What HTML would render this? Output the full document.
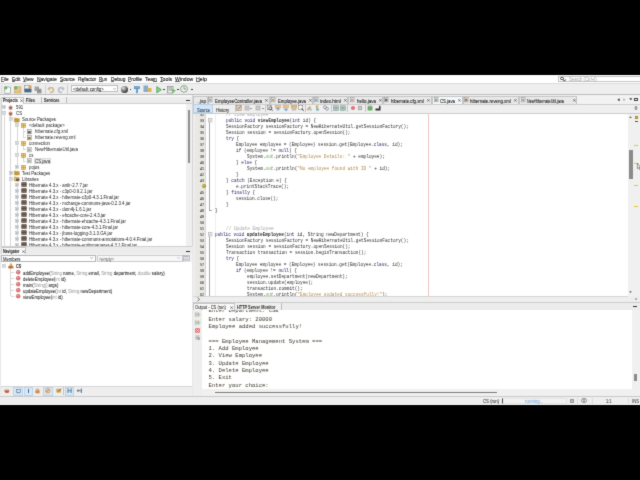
<!DOCTYPE html><html><head><meta charset="utf-8"><style>
html,body{margin:0;padding:0;background:#000;width:640px;height:480px;overflow:hidden}
#wrap{position:absolute;left:0;top:0;width:640px;height:480px;filter:url(#bl)}
#root{position:absolute;left:0;top:0;width:640px;height:480px;will-change:transform;background:#000}
.t{position:absolute;white-space:pre;line-height:0;height:0}
.r{position:absolute;box-sizing:border-box}
</style></head><body><svg width="0" height="0" style="position:absolute"><filter id="bl" x="0" y="0" width="640" height="480" filterUnits="userSpaceOnUse"><feConvolveMatrix color-interpolation-filters="sRGB" order="3" kernelMatrix="0.02 0.08 0.02 0.08 0.6 0.08 0.02 0.08 0.02" edgeMode="duplicate"/></filter></svg><div id="wrap"><div id="root">

<div class="r" style="left:0.00px;top:75.35px;width:640.00px;height:329.30px;background:#eeeeee;"></div>
<div class="r" style="left:0.00px;top:75.35px;width:640.00px;height:8.25px;background:#ffffff;"></div>
<div class="r" style="left:0.00px;top:83.40px;width:640.00px;height:0.70px;background:#dcdcdc;"></div>
<div class="t" style="left:1.40px;top:79.14px;font-size:6.125px;color:#1a1a1a;font-family:'Liberation Sans',sans-serif;-webkit-text-stroke:0.14px #1a1a1a;transform:scaleX(0.7599);transform-origin:0 0;">File</div>
<div class="r" style="left:1.40px;top:81.20px;width:2.84px;height:0.40px;background:#666;"></div>
<div class="t" style="left:11.70px;top:79.14px;font-size:6.125px;color:#1a1a1a;font-family:'Liberation Sans',sans-serif;-webkit-text-stroke:0.14px #1a1a1a;transform:scaleX(0.8054);transform-origin:0 0;">Edit</div>
<div class="r" style="left:11.70px;top:81.20px;width:3.29px;height:0.40px;background:#666;"></div>
<div class="t" style="left:23.00px;top:79.14px;font-size:6.125px;color:#1a1a1a;font-family:'Liberation Sans',sans-serif;-webkit-text-stroke:0.14px #1a1a1a;transform:scaleX(0.8127);transform-origin:0 0;">View</div>
<div class="r" style="left:23.00px;top:81.20px;width:3.32px;height:0.40px;background:#666;"></div>
<div class="t" style="left:37.00px;top:79.14px;font-size:6.125px;color:#1a1a1a;font-family:'Liberation Sans',sans-serif;-webkit-text-stroke:0.14px #1a1a1a;transform:scaleX(0.8149);transform-origin:0 0;">Navigate</div>
<div class="r" style="left:37.00px;top:81.20px;width:3.60px;height:0.40px;background:#666;"></div>
<div class="t" style="left:60.00px;top:79.14px;font-size:6.125px;color:#1a1a1a;font-family:'Liberation Sans',sans-serif;-webkit-text-stroke:0.14px #1a1a1a;transform:scaleX(0.7729);transform-origin:0 0;">Source</div>
<div class="r" style="left:60.00px;top:81.20px;width:3.16px;height:0.40px;background:#666;"></div>
<div class="t" style="left:78.10px;top:79.14px;font-size:6.125px;color:#1a1a1a;font-family:'Liberation Sans',sans-serif;-webkit-text-stroke:0.14px #1a1a1a;transform:scaleX(0.7862);transform-origin:0 0;">Refactor</div>
<div class="r" style="left:81.58px;top:81.20px;width:2.68px;height:0.40px;background:#666;"></div>
<div class="t" style="left:99.40px;top:79.14px;font-size:6.125px;color:#1a1a1a;font-family:'Liberation Sans',sans-serif;-webkit-text-stroke:0.14px #1a1a1a;transform:scaleX(0.7209);transform-origin:0 0;">Run</div>
<div class="r" style="left:99.40px;top:81.20px;width:3.19px;height:0.40px;background:#666;"></div>
<div class="t" style="left:110.60px;top:79.14px;font-size:6.125px;color:#1a1a1a;font-family:'Liberation Sans',sans-serif;-webkit-text-stroke:0.14px #1a1a1a;transform:scaleX(0.7978);transform-origin:0 0;">Debug</div>
<div class="r" style="left:110.60px;top:81.20px;width:3.53px;height:0.40px;background:#666;"></div>
<div class="t" style="left:128.10px;top:79.14px;font-size:6.125px;color:#1a1a1a;font-family:'Liberation Sans',sans-serif;-webkit-text-stroke:0.14px #1a1a1a;transform:scaleX(0.8122);transform-origin:0 0;">Profile</div>
<div class="r" style="left:128.10px;top:81.20px;width:3.32px;height:0.40px;background:#666;"></div>
<div class="t" style="left:145.10px;top:79.14px;font-size:6.125px;color:#1a1a1a;font-family:'Liberation Sans',sans-serif;-webkit-text-stroke:0.14px #1a1a1a;transform:scaleX(0.7945);transform-origin:0 0;">Team</div>
<div class="r" style="left:152.95px;top:81.20px;width:4.05px;height:0.40px;background:#666;"></div>
<div class="t" style="left:159.90px;top:79.14px;font-size:6.125px;color:#1a1a1a;font-family:'Liberation Sans',sans-serif;-webkit-text-stroke:0.14px #1a1a1a;transform:scaleX(0.8532);transform-origin:0 0;">Tools</div>
<div class="r" style="left:159.90px;top:81.20px;width:3.19px;height:0.40px;background:#666;"></div>
<div class="t" style="left:174.90px;top:79.14px;font-size:6.125px;color:#1a1a1a;font-family:'Liberation Sans',sans-serif;-webkit-text-stroke:0.14px #1a1a1a;transform:scaleX(0.8400);transform-origin:0 0;">Window</div>
<div class="r" style="left:174.90px;top:81.20px;width:4.86px;height:0.40px;background:#666;"></div>
<div class="t" style="left:196.00px;top:79.14px;font-size:6.125px;color:#1a1a1a;font-family:'Liberation Sans',sans-serif;-webkit-text-stroke:0.14px #1a1a1a;transform:scaleX(0.8653);transform-origin:0 0;">Help</div>
<div class="r" style="left:196.00px;top:81.20px;width:3.83px;height:0.40px;background:#666;"></div>
<div class="r" style="left:557.50px;top:75.60px;width:83.00px;height:6.80px;background:#ffffff;border:0.5px solid #c4c4c4"></div>
<div class="t" style="left:569.20px;top:79.60px;font-size:4.956px;color:#a0a0a0;font-family:'Liberation Sans',sans-serif;-webkit-text-stroke:0px #a0a0a0;transform:scaleX(0.8591);transform-origin:0 0;">Search (Ctrl+I)</div>
<div class="r" style="left:560.3px;top:76.8px;width:3.4px;height:3.4px;border:0.7px solid #333;border-radius:50%"></div>
<div class="r" style="left:563.20px;top:79.90px;width:2.00px;height:0.80px;background:#333;transform:rotate(45deg)"></div>
<div class="t" style="left:565.40px;top:79.70px;font-size:2.950px;color:#333;font-family:'Liberation Sans',sans-serif;-webkit-text-stroke:0px #333;transform:scaleX(0.8475);transform-origin:0 0;">▾</div>
<div class="r" style="left:0.00px;top:94.00px;width:640.00px;height:0.80px;background:#bdbdbd;"></div>
<div class="r" style="left:0.00px;top:94.80px;width:640.00px;height:2.50px;background:#f6f6f6;"></div>
<div class="r" style="left:1.20px;top:85.50px;width:0.80px;height:0.80px;background:#c4c4c4;"></div>
<div class="r" style="left:1.20px;top:87.50px;width:0.80px;height:0.80px;background:#c4c4c4;"></div>
<div class="r" style="left:1.20px;top:89.50px;width:0.80px;height:0.80px;background:#c4c4c4;"></div>
<div class="r" style="left:1.20px;top:91.50px;width:0.80px;height:0.80px;background:#c4c4c4;"></div>
<svg class="r" style="left:4.40px;top:85.60px;overflow:visible" width="7" height="7.4" viewBox="0 0 7 7.4"><rect x="0.8" y="1" width="5.6" height="6.2" fill="#fafafa" stroke="#8a8a8a" stroke-width="0.6"/><circle cx="1.8" cy="1.8" r="1.6" fill="#5cb85c"/></svg>
<svg class="r" style="left:13.70px;top:85.60px;overflow:visible" width="7.4" height="7.4" viewBox="0 0 7.4 7.4"><rect x="0.6" y="0.8" width="6.4" height="6.2" fill="#e6c482" stroke="#c09a5a" stroke-width="0.6"/><circle cx="1.8" cy="1.8" r="1.6" fill="#5cb85c"/></svg>
<svg class="r" style="left:24.00px;top:85.40px;overflow:visible" width="8" height="7.6" viewBox="0 0 8 7.6"><rect x="0.5" y="0.5" width="5" height="4" fill="#f0f0f0" stroke="#777" stroke-width="0.5"/><rect x="4.5" y="0.3" width="3" height="3" fill="#e0a050"/><rect x="0.3" y="3.6" width="7.2" height="3.8" fill="#4a6888"/></svg>
<svg class="r" style="left:34.00px;top:85.60px;overflow:visible" width="8" height="7.4" viewBox="0 0 8 7.4"><rect x="0.5" y="0.5" width="4.5" height="4.5" fill="#a4a4a4"/><rect x="3" y="2.8" width="4.5" height="4.5" fill="#949494"/></svg>
<div class="r" style="left:44.80px;top:85.00px;width:0.60px;height:8.50px;background:#d0d0d0;"></div>
<svg class="r" style="left:47.00px;top:85.60px;overflow:visible" width="8" height="7.4" viewBox="0 0 8 7.4"><path d="M1.5 2.5 Q6.5 0.5 6.5 4 Q6.5 6.5 3 6.5" fill="none" stroke="#d2b890" stroke-width="1.7"/><path d="M0.3 2.8 L3 0.6 L3 5 Z" fill="#d2b890"/></svg>
<svg class="r" style="left:57.40px;top:85.60px;overflow:visible" width="8" height="7.4" viewBox="0 0 8 7.4"><path d="M6.5 2.5 Q1.5 0.5 1.5 4 Q1.5 6.5 5 6.5" fill="none" stroke="#b6bec6" stroke-width="1.7"/><path d="M7.7 2.8 L5 0.6 L5 5 Z" fill="#b6bec6"/></svg>
<div class="r" style="left:66.80px;top:85.00px;width:0.60px;height:8.50px;background:#d0d0d0;"></div>
<div class="r" style="left:70.50px;top:85.30px;width:47.00px;height:7.20px;background:#ffffff;border:0.5px solid #bcbcbc"></div>
<div class="t" style="left:72.50px;top:88.60px;font-size:5.074px;color:#1a1a1a;font-family:'Liberation Sans',sans-serif;-webkit-text-stroke:0.04px #1a1a1a;transform:scaleX(0.8529);transform-origin:0 0;">&lt;default config&gt;</div>
<svg class="r" style="left:112.80px;top:87.80px;overflow:visible" width="3" height="2" viewBox="0 0 3 2"><path d="M0.2 0.2 L1.5 1.6 L2.8 0.2" fill="none" stroke="#777" stroke-width="0.6"/></svg>
<div class="r" style="left:120.5px;top:85.6px;width:7px;height:7px;border-radius:50%;background:radial-gradient(circle at 35% 30%,#e8e8e8 0,#8a8a8a 35%,#2a2a2a 80%)"></div>
<div class="r" style="left:129.70px;top:88.80px;width:1.60px;height:0.90px;background:#444;"></div>
<svg class="r" style="left:134.00px;top:85.60px;overflow:visible" width="6" height="7.4" viewBox="0 0 6 7.4"><rect x="0.3" y="0.5" width="5.4" height="2.4" fill="#6aa8dc" stroke="#3a78b0" stroke-width="0.4"/><rect x="2.1" y="2.7" width="1.8" height="4.5" fill="#5a98cc"/></svg>
<svg class="r" style="left:143.00px;top:85.40px;overflow:visible" width="9" height="7.6" viewBox="0 0 9 7.6"><rect x="0.5" y="0.5" width="4.5" height="6.5" fill="#6a9ac8" opacity=".8"/><path d="M4 1 L8.5 7 L5 7 Z" fill="#d8a040"/><rect x="4.5" y="3" width="4" height="4" fill="#e0b050"/></svg>
<svg class="r" style="left:155.50px;top:85.60px;overflow:visible" width="6" height="7.4" viewBox="0 0 6 7.4"><path d="M0.8 0.6 L5.4 3.7 L0.8 6.8 Z" fill="#8ed08e" stroke="#3a9a3a" stroke-width="0.7"/></svg>
<div class="r" style="left:163.20px;top:88.80px;width:1.60px;height:0.90px;background:#444;"></div>
<svg class="r" style="left:167.00px;top:85.60px;overflow:visible" width="9.5" height="7.4" viewBox="0 0 9.5 7.4"><rect x="0.5" y="0.5" width="5.5" height="6.5" fill="#f4f4f4" stroke="#777" stroke-width="0.6"/><rect x="1.3" y="1.5" width="3.8" height="1" fill="#888"/><rect x="1.3" y="3.5" width="3.8" height="1" fill="#888"/><path d="M5 2.5 L9 4.8 L5 7.2 Z" fill="#6ac06a"/></svg>
<div class="r" style="left:177.20px;top:88.80px;width:1.60px;height:0.90px;background:#444;"></div>
<svg class="r" style="left:180.30px;top:85.40px;overflow:visible" width="8.6" height="7.8" viewBox="0 0 8.6 7.8"><circle cx="4" cy="3.9" r="3.4" fill="#eef4ee" stroke="#7a8a7a" stroke-width="0.8"/><path d="M4 1.5 L4 4 L6 4" stroke="#4a9a4a" stroke-width="0.8" fill="none"/></svg>
<div class="r" style="left:191.20px;top:88.80px;width:1.60px;height:0.90px;background:#444;"></div>
<div class="r" style="left:0.00px;top:97.20px;width:192.60px;height:149.00px;background:#e8e8e8;"></div>
<div class="r" style="left:1.20px;top:96.70px;width:191.00px;height:0.50px;background:#dcdcdc;"></div>
<div class="r" style="left:1.20px;top:97.20px;width:191.00px;height:6.30px;background:#ececec;"></div>
<div class="r" style="left:1.20px;top:103.30px;width:191.00px;height:0.60px;background:#d0d0d0;"></div>
<div class="r" style="left:1.40px;top:97.30px;width:23.00px;height:6.60px;background:#fbfbfb;border:0.5px solid #c4c4c4;border-bottom:none"></div>
<div class="t" style="left:3.00px;top:101.30px;font-size:4.956px;color:#111;font-family:'Liberation Sans',sans-serif;font-weight:bold;-webkit-text-stroke:0.04px #111;transform:scaleX(0.7670);transform-origin:0 0;">Projects</div>
<svg class="r" style="left:20.10px;top:98.90px;overflow:visible" width="3.2" height="3.2" viewBox="0 0 3.2 3.2"><path d="M0.3 0.3 L2.9 2.9 M2.9 0.3 L0.3 2.9" stroke="#333" stroke-width="0.6"/></svg>
<div class="r" style="left:24.40px;top:97.30px;width:18.00px;height:6.10px;background:#efefef;border-right:0.6px solid #bcbcbc"></div>
<div class="t" style="left:26.00px;top:101.30px;font-size:4.956px;color:#222;font-family:'Liberation Sans',sans-serif;font-weight:bold;-webkit-text-stroke:0.04px #222;transform:scaleX(0.7969);transform-origin:0 0;">Files</div>
<div class="r" style="left:42.40px;top:97.30px;width:24.50px;height:6.10px;background:#efefef;border-right:0.6px solid #bcbcbc"></div>
<div class="t" style="left:44.00px;top:101.30px;font-size:4.956px;color:#222;font-family:'Liberation Sans',sans-serif;font-weight:bold;-webkit-text-stroke:0.04px #222;transform:scaleX(0.7601);transform-origin:0 0;">Services</div>
<div class="r" style="left:186.30px;top:100.20px;width:4.20px;height:1.00px;background:#333;"></div>
<div class="r" style="left:1.40px;top:103.90px;width:185.00px;height:142.20px;background:#ffffff;"></div>
<div class="r" style="left:0.90px;top:97.30px;width:0.50px;height:149.00px;background:#d0d0d0;"></div>
<div class="r" style="left:186.20px;top:103.90px;width:5.60px;height:142.20px;background:#efefef;"></div>
<div class="r" style="left:187.60px;top:110.20px;width:2.60px;height:53.30px;background:#8e8e8e;"></div>
<div class="r" style="left:192.00px;top:95.00px;width:0.60px;height:301.00px;background:#d4d4d4;"></div>
<div class="r" style="left:1.4px;top:103.9px;width:184.8px;height:141.7px;overflow:hidden"><div class="r" style="left:-1.4px;top:-103.9px;width:640px;height:480px">
<div class="r" style="left:4.00px;top:109.50px;width:0.50px;height:150.00px;background:#d8d8d8;"></div>
<div class="r" style="left:10.40px;top:115.77px;width:0.50px;height:150.00px;background:#d8d8d8;"></div>
<div class="r" style="left:16.90px;top:121.75px;width:0.50px;height:45.30px;background:#d8d8d8;"></div>
<div class="r" style="left:23.40px;top:127.72px;width:0.50px;height:9.45px;background:#d8d8d8;"></div>
<div class="r" style="left:23.40px;top:131.20px;width:3.00px;height:0.50px;background:#d8d8d8;"></div>
<div class="r" style="left:23.40px;top:137.18px;width:3.00px;height:0.50px;background:#d8d8d8;"></div>
<div class="r" style="left:23.40px;top:145.65px;width:0.50px;height:3.48px;background:#d8d8d8;"></div>
<div class="r" style="left:23.40px;top:149.12px;width:3.00px;height:0.50px;background:#d8d8d8;"></div>
<div class="r" style="left:23.40px;top:157.60px;width:0.50px;height:3.47px;background:#d8d8d8;"></div>
<div class="r" style="left:23.40px;top:161.07px;width:3.00px;height:0.50px;background:#d8d8d8;"></div>
<div class="r" style="left:16.90px;top:181.50px;width:0.50px;height:60.00px;background:#d8d8d8;"></div>
<svg class="r" style="left:2.20px;top:105.30px;overflow:visible" width="4" height="4" viewBox="0 0 4 4"><rect x="0.3" y="0.3" width="3.4" height="3.4" fill="#f6f6f6" stroke="#b4b8bc" stroke-width="0.55"/><path d="M1.1 2 H2.9 M2 1.1 V2.9" stroke="#6a7078" stroke-width="0.5"/></svg>
<svg class="r" style="left:8.00px;top:105.10px;overflow:visible" width="5.2" height="4.6" viewBox="0 0 5.2 4.6"><path d="M0.6 1.6 L4.6 1.6 L4.1 3.6 Q2.6 4.3 1.1 3.6 Z" fill="#a8583e"/><path d="M1.4 1.3 Q2.6 0 3.8 1.3" fill="none" stroke="#b87a60" stroke-width="0.6"/><ellipse cx="2.6" cy="4.1" rx="2.4" ry="0.45" fill="#7a4a3a"/></svg>
<div class="t" style="left:15.90px;top:108.13px;font-size:4.872px;color:#1a1a1a;font-family:'Liberation Sans',sans-serif;-webkit-text-stroke:0px #1a1a1a;transform:scaleX(0.8929);transform-origin:0 0;">591</div>
<svg class="r" style="left:2.20px;top:111.27px;overflow:visible" width="4" height="4" viewBox="0 0 4 4"><rect x="0.3" y="0.3" width="3.4" height="3.4" fill="#f6f6f6" stroke="#b4b8bc" stroke-width="0.55"/><path d="M1.1 2 H2.9" stroke="#6a7078" stroke-width="0.5"/></svg>
<svg class="r" style="left:8.00px;top:111.07px;overflow:visible" width="5.2" height="4.6" viewBox="0 0 5.2 4.6"><path d="M0.6 1.6 L4.6 1.6 L4.1 3.6 Q2.6 4.3 1.1 3.6 Z" fill="#a8583e"/><path d="M1.4 1.3 Q2.6 0 3.8 1.3" fill="none" stroke="#b87a60" stroke-width="0.6"/><ellipse cx="2.6" cy="4.1" rx="2.4" ry="0.45" fill="#7a4a3a"/></svg>
<div class="t" style="left:15.90px;top:114.11px;font-size:4.872px;color:#1a1a1a;font-family:'Liberation Sans',sans-serif;-webkit-text-stroke:0px #1a1a1a;transform:scaleX(0.8929);transform-origin:0 0;">CS</div>
<svg class="r" style="left:8.65px;top:117.25px;overflow:visible" width="4" height="4" viewBox="0 0 4 4"><rect x="0.3" y="0.3" width="3.4" height="3.4" fill="#f6f6f6" stroke="#b4b8bc" stroke-width="0.55"/><path d="M1.1 2 H2.9" stroke="#6a7078" stroke-width="0.5"/></svg>
<svg class="r" style="left:14.25px;top:116.65px;overflow:visible" width="5.6" height="5.2" viewBox="0 0 5.6 5.2"><path d="M0.3 1 H2.6 L3.2 1.6 H5.3 V5 H0.3 Z" fill="#e8c060" stroke="#a88030" stroke-width="0.5"/><rect x="1.6" y="2.4" width="2.6" height="2.2" fill="#c8a040" stroke="#987020" stroke-width="0.4"/></svg>
<div class="t" style="left:22.35px;top:120.08px;font-size:4.872px;color:#1a1a1a;font-family:'Liberation Sans',sans-serif;-webkit-text-stroke:0px #1a1a1a;transform:scaleX(0.8929);transform-origin:0 0;">Source Packages</div>
<svg class="r" style="left:15.10px;top:123.22px;overflow:visible" width="4" height="4" viewBox="0 0 4 4"><rect x="0.3" y="0.3" width="3.4" height="3.4" fill="#f6f6f6" stroke="#b4b8bc" stroke-width="0.55"/><path d="M1.1 2 H2.9" stroke="#6a7078" stroke-width="0.5"/></svg>
<svg class="r" style="left:21.00px;top:122.72px;overflow:visible" width="5" height="5" viewBox="0 0 5 5"><rect x="0.3" y="0.3" width="4.4" height="4.4" fill="#e8cc78" stroke="#b09040" stroke-width="0.5"/><path d="M2.5 0.3 V4.7 M0.3 2.5 H4.7" stroke="#b89848" stroke-width="0.6"/></svg>
<div class="t" style="left:28.80px;top:126.06px;font-size:4.872px;color:#1a1a1a;font-family:'Liberation Sans',sans-serif;-webkit-text-stroke:0px #1a1a1a;transform:scaleX(0.8929);transform-origin:0 0;">&lt;default package&gt;</div>
<svg class="r" style="left:27.30px;top:128.60px;overflow:visible" width="4.6" height="5.2" viewBox="0 0 4.6 5.2"><rect x="0.4" y="0.3" width="3.8" height="4.6" fill="#ececec" stroke="#7a7a7a" stroke-width="0.5"/><rect x="0.8" y="2" width="3" height="2.4" fill="#5a6a5a"/></svg>
<div class="t" style="left:34.80px;top:132.03px;font-size:4.872px;color:#1a1a1a;font-family:'Liberation Sans',sans-serif;-webkit-text-stroke:0px #1a1a1a;transform:scaleX(0.8929);transform-origin:0 0;">hibernate.cfg.xml</div>
<svg class="r" style="left:27.30px;top:134.58px;overflow:visible" width="4.6" height="5.2" viewBox="0 0 4.6 5.2"><rect x="0.4" y="0.3" width="3.8" height="4.6" fill="#ececec" stroke="#7a7a7a" stroke-width="0.5"/><rect x="0.8" y="2" width="3" height="2.4" fill="#9a8048"/></svg>
<div class="t" style="left:34.80px;top:138.01px;font-size:4.872px;color:#1a1a1a;font-family:'Liberation Sans',sans-serif;-webkit-text-stroke:0px #1a1a1a;transform:scaleX(0.8929);transform-origin:0 0;">hibernate.reveng.xml</div>
<svg class="r" style="left:15.10px;top:141.15px;overflow:visible" width="4" height="4" viewBox="0 0 4 4"><rect x="0.3" y="0.3" width="3.4" height="3.4" fill="#f6f6f6" stroke="#b4b8bc" stroke-width="0.55"/><path d="M1.1 2 H2.9" stroke="#6a7078" stroke-width="0.5"/></svg>
<svg class="r" style="left:21.00px;top:140.65px;overflow:visible" width="5" height="5" viewBox="0 0 5 5"><rect x="0.3" y="0.3" width="4.4" height="4.4" fill="#e8cc78" stroke="#b09040" stroke-width="0.5"/><path d="M2.5 0.3 V4.7 M0.3 2.5 H4.7" stroke="#b89848" stroke-width="0.6"/></svg>
<div class="t" style="left:28.80px;top:143.98px;font-size:4.872px;color:#1a1a1a;font-family:'Liberation Sans',sans-serif;-webkit-text-stroke:0px #1a1a1a;transform:scaleX(0.8929);transform-origin:0 0;">connection</div>
<svg class="r" style="left:27.30px;top:146.53px;overflow:visible" width="4.6" height="5.2" viewBox="0 0 4.6 5.2"><rect x="0.4" y="0.3" width="3.8" height="4.6" fill="#f2f2f2" stroke="#8a8a8a" stroke-width="0.5"/><rect x="1" y="1.6" width="2.6" height="2.6" fill="#a0b0a0"/></svg>
<div class="t" style="left:34.80px;top:149.96px;font-size:4.872px;color:#1a1a1a;font-family:'Liberation Sans',sans-serif;-webkit-text-stroke:0px #1a1a1a;transform:scaleX(0.8929);transform-origin:0 0;">NewHibernateUtil.java</div>
<svg class="r" style="left:15.10px;top:153.10px;overflow:visible" width="4" height="4" viewBox="0 0 4 4"><rect x="0.3" y="0.3" width="3.4" height="3.4" fill="#f6f6f6" stroke="#b4b8bc" stroke-width="0.55"/><path d="M1.1 2 H2.9" stroke="#6a7078" stroke-width="0.5"/></svg>
<svg class="r" style="left:21.00px;top:152.60px;overflow:visible" width="5" height="5" viewBox="0 0 5 5"><rect x="0.3" y="0.3" width="4.4" height="4.4" fill="#e8cc78" stroke="#b09040" stroke-width="0.5"/><path d="M2.5 0.3 V4.7 M0.3 2.5 H4.7" stroke="#b89848" stroke-width="0.6"/></svg>
<div class="t" style="left:28.80px;top:155.93px;font-size:4.872px;color:#1a1a1a;font-family:'Liberation Sans',sans-serif;-webkit-text-stroke:0px #1a1a1a;transform:scaleX(0.8929);transform-origin:0 0;">cs</div>
<svg class="r" style="left:27.30px;top:158.47px;overflow:visible" width="4.6" height="5.2" viewBox="0 0 4.6 5.2"><rect x="0.4" y="0.3" width="3.8" height="4.6" fill="#f2f2f2" stroke="#8a8a8a" stroke-width="0.5"/><rect x="1" y="1.6" width="2.6" height="2.6" fill="#a0b0a0"/></svg>
<div class="r" style="left:33.80px;top:157.97px;width:17.00px;height:6.20px;background:#f2f2f2;border:0.5px solid #dadada"></div>
<div class="t" style="left:34.80px;top:161.91px;font-size:4.872px;color:#1a1a1a;font-family:'Liberation Sans',sans-serif;-webkit-text-stroke:0px #1a1a1a;transform:scaleX(0.8929);transform-origin:0 0;">CS.java</div>
<svg class="r" style="left:15.10px;top:165.05px;overflow:visible" width="4" height="4" viewBox="0 0 4 4"><rect x="0.3" y="0.3" width="3.4" height="3.4" fill="#f6f6f6" stroke="#b4b8bc" stroke-width="0.55"/><path d="M1.1 2 H2.9 M2 1.1 V2.9" stroke="#6a7078" stroke-width="0.5"/></svg>
<svg class="r" style="left:21.00px;top:164.55px;overflow:visible" width="5" height="5" viewBox="0 0 5 5"><rect x="0.3" y="0.3" width="4.4" height="4.4" fill="#e8cc78" stroke="#b09040" stroke-width="0.5"/><path d="M2.5 0.3 V4.7 M0.3 2.5 H4.7" stroke="#b89848" stroke-width="0.6"/></svg>
<div class="t" style="left:28.80px;top:167.88px;font-size:4.872px;color:#1a1a1a;font-family:'Liberation Sans',sans-serif;-webkit-text-stroke:0px #1a1a1a;transform:scaleX(0.8929);transform-origin:0 0;">pojos</div>
<svg class="r" style="left:8.65px;top:171.02px;overflow:visible" width="4" height="4" viewBox="0 0 4 4"><rect x="0.3" y="0.3" width="3.4" height="3.4" fill="#f6f6f6" stroke="#b4b8bc" stroke-width="0.55"/><path d="M1.1 2 H2.9 M2 1.1 V2.9" stroke="#6a7078" stroke-width="0.5"/></svg>
<svg class="r" style="left:14.25px;top:170.42px;overflow:visible" width="5.6" height="5.2" viewBox="0 0 5.6 5.2"><path d="M0.3 1 H2.6 L3.2 1.6 H5.3 V5 H0.3 Z" fill="#e8c060" stroke="#a88030" stroke-width="0.5"/><rect x="1.6" y="2.4" width="2.6" height="2.2" fill="#c8a040" stroke="#987020" stroke-width="0.4"/></svg>
<div class="t" style="left:22.35px;top:173.86px;font-size:4.872px;color:#1a1a1a;font-family:'Liberation Sans',sans-serif;-webkit-text-stroke:0px #1a1a1a;transform:scaleX(0.8929);transform-origin:0 0;">Test Packages</div>
<svg class="r" style="left:8.65px;top:177.00px;overflow:visible" width="4" height="4" viewBox="0 0 4 4"><rect x="0.3" y="0.3" width="3.4" height="3.4" fill="#f6f6f6" stroke="#b4b8bc" stroke-width="0.55"/><path d="M1.1 2 H2.9" stroke="#6a7078" stroke-width="0.5"/></svg>
<svg class="r" style="left:14.25px;top:176.40px;overflow:visible" width="5.6" height="5.2" viewBox="0 0 5.6 5.2"><path d="M0.3 1 H2.6 L3.2 1.6 H5.3 V5 H0.3 Z" fill="#e8c060" stroke="#a88030" stroke-width="0.5"/><rect x="2" y="2.6" width="3" height="2.4" fill="#6a5040"/></svg>
<div class="t" style="left:22.35px;top:179.83px;font-size:4.872px;color:#1a1a1a;font-family:'Liberation Sans',sans-serif;-webkit-text-stroke:0px #1a1a1a;transform:scaleX(0.8929);transform-origin:0 0;">Libraries</div>
<svg class="r" style="left:15.10px;top:182.97px;overflow:visible" width="4" height="4" viewBox="0 0 4 4"><rect x="0.3" y="0.3" width="3.4" height="3.4" fill="#f6f6f6" stroke="#b4b8bc" stroke-width="0.55"/><path d="M1.1 2 H2.9 M2 1.1 V2.9" stroke="#6a7078" stroke-width="0.5"/></svg>
<svg class="r" style="left:20.50px;top:182.38px;overflow:visible" width="6" height="5" viewBox="0 0 6 5"><rect x="0.3" y="0.3" width="5.4" height="4.4" rx="0.5" fill="#54443a"/><rect x="0.3" y="1.6" width="5.4" height="0.5" fill="#a09080"/><rect x="0.3" y="3" width="5.4" height="0.5" fill="#a09080"/></svg>
<div class="t" style="left:28.80px;top:185.81px;font-size:4.872px;color:#1a1a1a;font-family:'Liberation Sans',sans-serif;-webkit-text-stroke:0px #1a1a1a;transform:scaleX(0.8929);transform-origin:0 0;">Hibernate 4.3.x - antlr-2.7.7.jar</div>
<svg class="r" style="left:15.10px;top:188.95px;overflow:visible" width="4" height="4" viewBox="0 0 4 4"><rect x="0.3" y="0.3" width="3.4" height="3.4" fill="#f6f6f6" stroke="#b4b8bc" stroke-width="0.55"/><path d="M1.1 2 H2.9 M2 1.1 V2.9" stroke="#6a7078" stroke-width="0.5"/></svg>
<svg class="r" style="left:20.50px;top:188.35px;overflow:visible" width="6" height="5" viewBox="0 0 6 5"><rect x="0.3" y="0.3" width="5.4" height="4.4" rx="0.5" fill="#54443a"/><rect x="0.3" y="1.6" width="5.4" height="0.5" fill="#a09080"/><rect x="0.3" y="3" width="5.4" height="0.5" fill="#a09080"/></svg>
<div class="t" style="left:28.80px;top:191.78px;font-size:4.872px;color:#1a1a1a;font-family:'Liberation Sans',sans-serif;-webkit-text-stroke:0px #1a1a1a;transform:scaleX(0.8929);transform-origin:0 0;">Hibernate 4.3.x - c3p0-0.9.2.1.jar</div>
<svg class="r" style="left:15.10px;top:194.93px;overflow:visible" width="4" height="4" viewBox="0 0 4 4"><rect x="0.3" y="0.3" width="3.4" height="3.4" fill="#f6f6f6" stroke="#b4b8bc" stroke-width="0.55"/><path d="M1.1 2 H2.9 M2 1.1 V2.9" stroke="#6a7078" stroke-width="0.5"/></svg>
<svg class="r" style="left:20.50px;top:194.33px;overflow:visible" width="6" height="5" viewBox="0 0 6 5"><rect x="0.3" y="0.3" width="5.4" height="4.4" rx="0.5" fill="#54443a"/><rect x="0.3" y="1.6" width="5.4" height="0.5" fill="#a09080"/><rect x="0.3" y="3" width="5.4" height="0.5" fill="#a09080"/></svg>
<div class="t" style="left:28.80px;top:197.76px;font-size:4.872px;color:#1a1a1a;font-family:'Liberation Sans',sans-serif;-webkit-text-stroke:0px #1a1a1a;transform:scaleX(0.8929);transform-origin:0 0;">Hibernate 4.3.x - hibernate-c3p0-4.3.1.Final.jar</div>
<svg class="r" style="left:15.10px;top:200.90px;overflow:visible" width="4" height="4" viewBox="0 0 4 4"><rect x="0.3" y="0.3" width="3.4" height="3.4" fill="#f6f6f6" stroke="#b4b8bc" stroke-width="0.55"/><path d="M1.1 2 H2.9 M2 1.1 V2.9" stroke="#6a7078" stroke-width="0.5"/></svg>
<svg class="r" style="left:20.50px;top:200.30px;overflow:visible" width="6" height="5" viewBox="0 0 6 5"><rect x="0.3" y="0.3" width="5.4" height="4.4" rx="0.5" fill="#54443a"/><rect x="0.3" y="1.6" width="5.4" height="0.5" fill="#a09080"/><rect x="0.3" y="3" width="5.4" height="0.5" fill="#a09080"/></svg>
<div class="t" style="left:28.80px;top:203.73px;font-size:4.872px;color:#1a1a1a;font-family:'Liberation Sans',sans-serif;-webkit-text-stroke:0px #1a1a1a;transform:scaleX(0.8929);transform-origin:0 0;">Hibernate 4.3.x - mchange-commons-java-0.2.3.4.jar</div>
<svg class="r" style="left:15.10px;top:206.88px;overflow:visible" width="4" height="4" viewBox="0 0 4 4"><rect x="0.3" y="0.3" width="3.4" height="3.4" fill="#f6f6f6" stroke="#b4b8bc" stroke-width="0.55"/><path d="M1.1 2 H2.9 M2 1.1 V2.9" stroke="#6a7078" stroke-width="0.5"/></svg>
<svg class="r" style="left:20.50px;top:206.28px;overflow:visible" width="6" height="5" viewBox="0 0 6 5"><rect x="0.3" y="0.3" width="5.4" height="4.4" rx="0.5" fill="#54443a"/><rect x="0.3" y="1.6" width="5.4" height="0.5" fill="#a09080"/><rect x="0.3" y="3" width="5.4" height="0.5" fill="#a09080"/></svg>
<div class="t" style="left:28.80px;top:209.71px;font-size:4.872px;color:#1a1a1a;font-family:'Liberation Sans',sans-serif;-webkit-text-stroke:0px #1a1a1a;transform:scaleX(0.8929);transform-origin:0 0;">Hibernate 4.3.x - dom4j-1.6.1.jar</div>
<svg class="r" style="left:15.10px;top:212.85px;overflow:visible" width="4" height="4" viewBox="0 0 4 4"><rect x="0.3" y="0.3" width="3.4" height="3.4" fill="#f6f6f6" stroke="#b4b8bc" stroke-width="0.55"/><path d="M1.1 2 H2.9 M2 1.1 V2.9" stroke="#6a7078" stroke-width="0.5"/></svg>
<svg class="r" style="left:20.50px;top:212.25px;overflow:visible" width="6" height="5" viewBox="0 0 6 5"><rect x="0.3" y="0.3" width="5.4" height="4.4" rx="0.5" fill="#54443a"/><rect x="0.3" y="1.6" width="5.4" height="0.5" fill="#a09080"/><rect x="0.3" y="3" width="5.4" height="0.5" fill="#a09080"/></svg>
<div class="t" style="left:28.80px;top:215.68px;font-size:4.872px;color:#1a1a1a;font-family:'Liberation Sans',sans-serif;-webkit-text-stroke:0px #1a1a1a;transform:scaleX(0.8929);transform-origin:0 0;">Hibernate 4.3.x - ehcache-core-2.4.3.jar</div>
<svg class="r" style="left:15.10px;top:218.82px;overflow:visible" width="4" height="4" viewBox="0 0 4 4"><rect x="0.3" y="0.3" width="3.4" height="3.4" fill="#f6f6f6" stroke="#b4b8bc" stroke-width="0.55"/><path d="M1.1 2 H2.9 M2 1.1 V2.9" stroke="#6a7078" stroke-width="0.5"/></svg>
<svg class="r" style="left:20.50px;top:218.22px;overflow:visible" width="6" height="5" viewBox="0 0 6 5"><rect x="0.3" y="0.3" width="5.4" height="4.4" rx="0.5" fill="#54443a"/><rect x="0.3" y="1.6" width="5.4" height="0.5" fill="#a09080"/><rect x="0.3" y="3" width="5.4" height="0.5" fill="#a09080"/></svg>
<div class="t" style="left:28.80px;top:221.66px;font-size:4.872px;color:#1a1a1a;font-family:'Liberation Sans',sans-serif;-webkit-text-stroke:0px #1a1a1a;transform:scaleX(0.8929);transform-origin:0 0;">Hibernate 4.3.x - hibernate-ehcache-4.3.1.Final.jar</div>
<svg class="r" style="left:15.10px;top:224.80px;overflow:visible" width="4" height="4" viewBox="0 0 4 4"><rect x="0.3" y="0.3" width="3.4" height="3.4" fill="#f6f6f6" stroke="#b4b8bc" stroke-width="0.55"/><path d="M1.1 2 H2.9 M2 1.1 V2.9" stroke="#6a7078" stroke-width="0.5"/></svg>
<svg class="r" style="left:20.50px;top:224.20px;overflow:visible" width="6" height="5" viewBox="0 0 6 5"><rect x="0.3" y="0.3" width="5.4" height="4.4" rx="0.5" fill="#54443a"/><rect x="0.3" y="1.6" width="5.4" height="0.5" fill="#a09080"/><rect x="0.3" y="3" width="5.4" height="0.5" fill="#a09080"/></svg>
<div class="t" style="left:28.80px;top:227.63px;font-size:4.872px;color:#1a1a1a;font-family:'Liberation Sans',sans-serif;-webkit-text-stroke:0px #1a1a1a;transform:scaleX(0.8929);transform-origin:0 0;">Hibernate 4.3.x - hibernate-core-4.3.1.Final.jar</div>
<svg class="r" style="left:15.10px;top:230.77px;overflow:visible" width="4" height="4" viewBox="0 0 4 4"><rect x="0.3" y="0.3" width="3.4" height="3.4" fill="#f6f6f6" stroke="#b4b8bc" stroke-width="0.55"/><path d="M1.1 2 H2.9 M2 1.1 V2.9" stroke="#6a7078" stroke-width="0.5"/></svg>
<svg class="r" style="left:20.50px;top:230.17px;overflow:visible" width="6" height="5" viewBox="0 0 6 5"><rect x="0.3" y="0.3" width="5.4" height="4.4" rx="0.5" fill="#54443a"/><rect x="0.3" y="1.6" width="5.4" height="0.5" fill="#a09080"/><rect x="0.3" y="3" width="5.4" height="0.5" fill="#a09080"/></svg>
<div class="t" style="left:28.80px;top:233.61px;font-size:4.872px;color:#1a1a1a;font-family:'Liberation Sans',sans-serif;-webkit-text-stroke:0px #1a1a1a;transform:scaleX(0.8929);transform-origin:0 0;">Hibernate 4.3.x - jboss-logging-3.1.3.GA.jar</div>
<svg class="r" style="left:15.10px;top:236.75px;overflow:visible" width="4" height="4" viewBox="0 0 4 4"><rect x="0.3" y="0.3" width="3.4" height="3.4" fill="#f6f6f6" stroke="#b4b8bc" stroke-width="0.55"/><path d="M1.1 2 H2.9 M2 1.1 V2.9" stroke="#6a7078" stroke-width="0.5"/></svg>
<svg class="r" style="left:20.50px;top:236.15px;overflow:visible" width="6" height="5" viewBox="0 0 6 5"><rect x="0.3" y="0.3" width="5.4" height="4.4" rx="0.5" fill="#54443a"/><rect x="0.3" y="1.6" width="5.4" height="0.5" fill="#a09080"/><rect x="0.3" y="3" width="5.4" height="0.5" fill="#a09080"/></svg>
<div class="t" style="left:28.80px;top:239.58px;font-size:4.872px;color:#1a1a1a;font-family:'Liberation Sans',sans-serif;-webkit-text-stroke:0px #1a1a1a;transform:scaleX(0.8929);transform-origin:0 0;">Hibernate 4.3.x - hibernate-commons-annotations-4.0.4.Final.jar</div>
<svg class="r" style="left:15.10px;top:242.72px;overflow:visible" width="4" height="4" viewBox="0 0 4 4"><rect x="0.3" y="0.3" width="3.4" height="3.4" fill="#f6f6f6" stroke="#b4b8bc" stroke-width="0.55"/><path d="M1.1 2 H2.9 M2 1.1 V2.9" stroke="#6a7078" stroke-width="0.5"/></svg>
<svg class="r" style="left:20.50px;top:242.12px;overflow:visible" width="6" height="5" viewBox="0 0 6 5"><rect x="0.3" y="0.3" width="5.4" height="4.4" rx="0.5" fill="#54443a"/><rect x="0.3" y="1.6" width="5.4" height="0.5" fill="#a09080"/><rect x="0.3" y="3" width="5.4" height="0.5" fill="#a09080"/></svg>
<div class="t" style="left:28.80px;top:245.56px;font-size:4.872px;color:#1a1a1a;font-family:'Liberation Sans',sans-serif;-webkit-text-stroke:0px #1a1a1a;transform:scaleX(0.8929);transform-origin:0 0;">Hibernate 4.3.x - hibernate-entitymanager-4.3.1.Final.jar</div>
</div></div>
<div class="r" style="left:0.00px;top:246.10px;width:192.60px;height:150.50px;background:#e8e8e8;"></div>
<div class="r" style="left:1.20px;top:246.10px;width:191.00px;height:0.50px;background:#d0d0d0;"></div>
<div class="r" style="left:1.20px;top:246.60px;width:191.00px;height:7.60px;background:#ececec;"></div>
<div class="r" style="left:1.20px;top:253.90px;width:191.00px;height:0.50px;background:#d0d0d0;"></div>
<div class="r" style="left:1.40px;top:247.20px;width:24.50px;height:7.20px;background:#fbfbfb;border:0.5px solid #c4c4c4;border-bottom:none"></div>
<div class="t" style="left:3.00px;top:251.90px;font-size:4.956px;color:#111;font-family:'Liberation Sans',sans-serif;font-weight:bold;-webkit-text-stroke:0.04px #111;transform:scaleX(0.7218);transform-origin:0 0;">Navigator</div>
<svg class="r" style="left:21.60px;top:249.60px;overflow:visible" width="3.2" height="3.2" viewBox="0 0 3.2 3.2"><path d="M0.3 0.3 L2.9 2.9 M2.9 0.3 L0.3 2.9" stroke="#333" stroke-width="0.6"/></svg>
<div class="r" style="left:186.30px;top:251.20px;width:4.20px;height:1.00px;background:#333;"></div>
<div class="r" style="left:0.90px;top:246.60px;width:0.50px;height:150.00px;background:#d0d0d0;"></div>
<div class="r" style="left:1.40px;top:254.40px;width:190.60px;height:8.00px;background:#f2f2f2;"></div>
<div class="r" style="left:1.40px;top:254.60px;width:94.20px;height:7.40px;background:#ffffff;border:0.5px solid #b4b4b4"></div>
<div class="t" style="left:3.00px;top:258.90px;font-size:5.074px;color:#202020;font-family:'Liberation Sans',sans-serif;-webkit-text-stroke:0.04px #202020;transform:scaleX(0.8276);transform-origin:0 0;">Members</div>
<svg class="r" style="left:90.20px;top:257.40px;overflow:visible" width="3" height="2" viewBox="0 0 3 2"><path d="M0.2 0.2 L1.5 1.6 L2.8 0.2" fill="none" stroke="#777" stroke-width="0.6"/></svg>
<div class="r" style="left:96.80px;top:254.60px;width:85.80px;height:7.40px;background:#f7f7f7;border:0.5px solid #cccccc"></div>
<div class="t" style="left:98.60px;top:258.90px;font-size:5.074px;color:#6a6a6a;font-family:'Liberation Sans',sans-serif;-webkit-text-stroke:0.04px #6a6a6a;transform:scaleX(0.7597);transform-origin:0 0;">&lt;empty&gt;</div>
<svg class="r" style="left:177.40px;top:257.40px;overflow:visible" width="3" height="2" viewBox="0 0 3 2"><path d="M0.2 0.2 L1.5 1.6 L2.8 0.2" fill="none" stroke="#aaa" stroke-width="0.6"/></svg>
<svg class="r" style="left:183.40px;top:255.30px;overflow:visible" width="6.8" height="6.2" viewBox="0 0 6.8 6.2"><rect x="0.3" y="0.3" width="6.2" height="5.6" fill="#eef0f2" stroke="#8a9098" stroke-width="0.5"/><rect x="1.2" y="1.4" width="4.4" height="0.6" fill="#8a9098"/><rect x="1.2" y="2.8" width="4.4" height="0.5" fill="#a0a6ac"/><rect x="1.2" y="4" width="4.4" height="0.5" fill="#a0a6ac"/></svg>
<div class="r" style="left:1.40px;top:262.40px;width:190.60px;height:123.20px;background:#ffffff;"></div>
<div class="r" style="left:10.20px;top:268.20px;width:0.50px;height:27.80px;background:#d8d8d8;"></div>
<svg class="r" style="left:1.80px;top:264.00px;overflow:visible" width="4" height="4" viewBox="0 0 4 4"><rect x="0.3" y="0.3" width="3.4" height="3.4" fill="#f6f6f6" stroke="#b4b8bc" stroke-width="0.55"/><path d="M1.1 2 H2.9" stroke="#6a7078" stroke-width="0.5"/></svg>
<svg class="r" style="left:8.00px;top:263.20px;overflow:visible" width="6" height="5.4" viewBox="0 0 6 5.4"><path d="M3 0.3 L5.7 5.1 L0.3 5.1 Z" fill="#f0c040" stroke="#b08020" stroke-width="0.5"/><rect x="0.6" y="3" width="4" height="2.2" fill="#b86a40"/></svg>
<div class="t" style="left:16.00px;top:266.49px;font-size:5.192px;color:#202020;font-family:'Liberation Sans',sans-serif;font-weight:bold;-webkit-text-stroke:0.04px #202020;transform:scaleX(0.7210);transform-origin:0 0;">CS</div>
<div class="r" style="left:10.50px;top:272.10px;width:3.00px;height:0.50px;background:#d8d8d8;"></div>
<svg class="r" style="left:16.00px;top:269.90px;overflow:visible" width="4.4" height="4.4" viewBox="0 0 4.4 4.4"><circle cx="2.2" cy="2.2" r="1.9" fill="#e27a7a" stroke="#b04848" stroke-width="0.5"/><circle cx="1.7" cy="1.6" r="0.7" fill="#f4c0c0"/></svg>
<div class="t" style="left:22.50px;top:272.70px;font-size:5.074px;color:#1a1a1a;font-family:'Liberation Sans',sans-serif;-webkit-text-stroke:0.04px #1a1a1a;transform:scaleX(0.8475);transform-origin:0 0;">addEmployee(<span style="color:#9a9a9a;-webkit-text-stroke-color:#9a9a9a">String</span> name, <span style="color:#9a9a9a;-webkit-text-stroke-color:#9a9a9a">String</span> email, <span style="color:#9a9a9a;-webkit-text-stroke-color:#9a9a9a">String</span> department, <span style="color:#9a9a9a;-webkit-text-stroke-color:#9a9a9a">double</span> salary)</div>
<div class="r" style="left:10.50px;top:278.05px;width:3.00px;height:0.50px;background:#d8d8d8;"></div>
<svg class="r" style="left:16.00px;top:275.85px;overflow:visible" width="4.4" height="4.4" viewBox="0 0 4.4 4.4"><circle cx="2.2" cy="2.2" r="1.9" fill="#e27a7a" stroke="#b04848" stroke-width="0.5"/><circle cx="1.7" cy="1.6" r="0.7" fill="#f4c0c0"/></svg>
<div class="t" style="left:22.50px;top:278.65px;font-size:5.074px;color:#1a1a1a;font-family:'Liberation Sans',sans-serif;-webkit-text-stroke:0.04px #1a1a1a;transform:scaleX(0.8475);transform-origin:0 0;">deleteEmployee(<span style="color:#9a9a9a;-webkit-text-stroke-color:#9a9a9a">int</span> id)</div>
<div class="r" style="left:10.50px;top:284.00px;width:3.00px;height:0.50px;background:#d8d8d8;"></div>
<svg class="r" style="left:16.00px;top:281.80px;overflow:visible" width="4.4" height="4.4" viewBox="0 0 4.4 4.4"><circle cx="2.2" cy="2.2" r="1.9" fill="#e27a7a" stroke="#b04848" stroke-width="0.5"/><circle cx="1.7" cy="1.6" r="0.7" fill="#f4c0c0"/></svg>
<div class="t" style="left:22.50px;top:284.60px;font-size:5.074px;color:#1a1a1a;font-family:'Liberation Sans',sans-serif;-webkit-text-stroke:0.04px #1a1a1a;transform:scaleX(0.8475);transform-origin:0 0;">main(<span style="color:#9a9a9a;-webkit-text-stroke-color:#9a9a9a">String[]</span> args)</div>
<div class="r" style="left:10.50px;top:289.95px;width:3.00px;height:0.50px;background:#d8d8d8;"></div>
<svg class="r" style="left:16.00px;top:287.75px;overflow:visible" width="4.4" height="4.4" viewBox="0 0 4.4 4.4"><circle cx="2.2" cy="2.2" r="1.9" fill="#e27a7a" stroke="#b04848" stroke-width="0.5"/><circle cx="1.7" cy="1.6" r="0.7" fill="#f4c0c0"/></svg>
<div class="t" style="left:22.50px;top:290.55px;font-size:5.074px;color:#1a1a1a;font-family:'Liberation Sans',sans-serif;-webkit-text-stroke:0.04px #1a1a1a;transform:scaleX(0.8475);transform-origin:0 0;">updateEmployee(<span style="color:#9a9a9a;-webkit-text-stroke-color:#9a9a9a">int</span> id, <span style="color:#9a9a9a;-webkit-text-stroke-color:#9a9a9a">String</span> newDepartment)</div>
<div class="r" style="left:10.50px;top:295.90px;width:3.00px;height:0.50px;background:#d8d8d8;"></div>
<svg class="r" style="left:16.00px;top:293.70px;overflow:visible" width="4.4" height="4.4" viewBox="0 0 4.4 4.4"><circle cx="2.2" cy="2.2" r="1.9" fill="#e27a7a" stroke="#b04848" stroke-width="0.5"/><circle cx="1.7" cy="1.6" r="0.7" fill="#f4c0c0"/></svg>
<div class="t" style="left:22.50px;top:296.50px;font-size:5.074px;color:#1a1a1a;font-family:'Liberation Sans',sans-serif;-webkit-text-stroke:0.04px #1a1a1a;transform:scaleX(0.8475);transform-origin:0 0;">viewEmployee(<span style="color:#9a9a9a;-webkit-text-stroke-color:#9a9a9a">int</span> id)</div>
<div class="r" style="left:1.40px;top:385.60px;width:190.60px;height:10.60px;background:#eeeeee;"></div>
<div class="r" style="left:1.40px;top:385.60px;width:190.60px;height:0.50px;background:#d6d6d6;"></div>
<div class="r" style="left:13.20px;top:386.60px;width:10.20px;height:9.00px;background:#d8e8f6;border:0.5px solid #bcd6ec"></div>
<div class="r" style="left:23.60px;top:386.60px;width:9.40px;height:9.00px;background:#d8e8f6;border:0.5px solid #bcd6ec"></div>
<div class="r" style="left:43.20px;top:386.60px;width:9.60px;height:9.00px;background:#d8e8f6;border:0.5px solid #bcd6ec"></div>
<div class="r" style="left:64.80px;top:386.60px;width:9.40px;height:9.00px;background:#d8e8f6;border:0.5px solid #bcd6ec"></div>
<svg class="r" style="left:4.20px;top:388.40px;overflow:visible" width="6" height="5.4" viewBox="0 0 6 5.4"><path d="M0.4 2 L5.4 2 L4.8 4.6 Q2.9 5.4 1 4.6 Z" fill="#b85a3a"/><ellipse cx="2.9" cy="2" rx="2.4" ry="0.8" fill="#e0a890"/></svg>
<svg class="r" style="left:15.50px;top:388.60px;overflow:visible" width="5" height="4.4" viewBox="0 0 5 4.4"><rect x="0.4" y="0.4" width="4.2" height="3" fill="#cfe0f0" stroke="#5a7aa0" stroke-width="0.6"/><rect x="1.2" y="3.6" width="2.6" height="0.6" fill="#5a7aa0"/></svg>
<div class="r" style="left:27.60px;top:388.60px;width:0.80px;height:4.80px;background:#4a6a9a;"></div>
<svg class="r" style="left:34.80px;top:388.20px;overflow:visible" width="5" height="5.4" viewBox="0 0 5 5.4"><path d="M1.2 2.4 V1.6 Q2.5 -0.2 3.8 1.6 V2.4" fill="none" stroke="#8a6030" stroke-width="0.6"/><rect x="0.4" y="2.3" width="4.2" height="3" fill="#d08a40"/></svg>
<svg class="r" style="left:45.00px;top:388.20px;overflow:visible" width="5.6" height="5.4" viewBox="0 0 5.6 5.4"><circle cx="2.8" cy="2.8" r="2.3" fill="#f0d0a0" stroke="#c08050" stroke-width="0.6"/><path d="M1.5 4 L4 1.5" stroke="#c05a30" stroke-width="0.8"/></svg>
<svg class="r" style="left:56.00px;top:388.40px;overflow:visible" width="5.6" height="5" viewBox="0 0 5.6 5"><rect x="0.3" y="0.8" width="4.6" height="3.8" fill="#c8a858"/><path d="M2.5 3.5 L5.3 0.6" stroke="#6a5a3a" stroke-width="0.8"/></svg>
<div class="r" style="left:63.40px;top:387.00px;width:0.50px;height:8.00px;background:#c4c4c4;"></div>
<svg class="r" style="left:66.80px;top:388.20px;overflow:visible" width="5.4" height="5.4" viewBox="0 0 5.4 5.4"><rect x="0.4" y="0.4" width="1.2" height="4.6" fill="#6a88a8"/><rect x="3.6" y="0.4" width="1.2" height="4.6" fill="#6a88a8"/><path d="M1.6 2.7 H3.6" stroke="#3a5a7a" stroke-width="0.8"/></svg>
<svg class="r" style="left:77.00px;top:388.20px;overflow:visible" width="5.4" height="5.4" viewBox="0 0 5.4 5.4"><rect x="3.8" y="0.4" width="1.2" height="4.6" fill="#6a88a8"/><path d="M0.3 2.7 H3.8 M1.5 1.3 L0.3 2.7 L1.5 4.1" stroke="#3a5a7a" stroke-width="0.8" fill="none"/></svg>
<div class="r" style="left:0.00px;top:396.30px;width:640.00px;height:0.60px;background:#cacaca;"></div>
<div class="r" style="left:192.60px;top:95.00px;width:447.40px;height:207.50px;background:#e8e8e8;"></div>
<div class="r" style="left:193.00px;top:95.00px;width:447.00px;height:9.20px;background:#f2f2f2;"></div>
<div class="r" style="left:193.00px;top:95.60px;width:14.50px;height:8.20px;background:#e9e9e9;border:0.5px solid #c4c4c4;border-bottom:none"></div>
<div class="t" style="left:197.00px;top:100.85px;font-size:5.074px;color:#1e1e1e;font-family:'Liberation Sans',sans-serif;-webkit-text-stroke:0.04px #1e1e1e;transform:scaleX(1.0101);transform-origin:0 0;">..jsp</div>
<div class="r" style="left:207.50px;top:95.60px;width:62.50px;height:8.20px;background:#e9e9e9;border:0.5px solid #c4c4c4;border-bottom:none"></div>
<svg class="r" style="left:208.30px;top:97.20px;overflow:visible" width="4.4" height="5.2" viewBox="0 0 4.4 5.2"><rect x="0.35" y="0.3" width="3.7" height="4.6" fill="#f0f0f0" stroke="#8a8a8a" stroke-width="0.5"/><rect x="0.9" y="1.7" width="2.6" height="2.6" fill="#a8a8a8"/></svg>
<div class="t" style="left:214.70px;top:100.85px;font-size:5.074px;color:#151515;font-family:'Liberation Sans',sans-serif;-webkit-text-stroke:0.08px #151515;transform:scaleX(0.8546);transform-origin:0 0;">EmployeeController.java</div>
<svg class="r" style="left:264.60px;top:98.70px;overflow:visible" width="2.8" height="2.8" viewBox="0 0 2.8 2.8"><path d="M0.2 0.2 L2.6 2.6 M2.6 0.2 L0.2 2.6" stroke="#333" stroke-width="0.6"/></svg>
<div class="r" style="left:270.00px;top:95.60px;width:43.00px;height:8.20px;background:#e9e9e9;border:0.5px solid #c4c4c4;border-bottom:none"></div>
<svg class="r" style="left:271.30px;top:97.20px;overflow:visible" width="4.4" height="5.2" viewBox="0 0 4.4 5.2"><rect x="0.35" y="0.3" width="3.7" height="4.6" fill="#f0f0f0" stroke="#8a8a8a" stroke-width="0.5"/><rect x="0.9" y="1.7" width="2.6" height="2.6" fill="#b4a890"/></svg>
<div class="t" style="left:277.70px;top:100.85px;font-size:5.074px;color:#151515;font-family:'Liberation Sans',sans-serif;-webkit-text-stroke:0.08px #151515;transform:scaleX(0.8413);transform-origin:0 0;">Employee.java</div>
<svg class="r" style="left:308.60px;top:98.70px;overflow:visible" width="2.8" height="2.8" viewBox="0 0 2.8 2.8"><path d="M0.2 0.2 L2.6 2.6 M2.6 0.2 L0.2 2.6" stroke="#333" stroke-width="0.6"/></svg>
<div class="r" style="left:313.00px;top:95.60px;width:35.00px;height:8.20px;background:#e9e9e9;border:0.5px solid #c4c4c4;border-bottom:none"></div>
<svg class="r" style="left:313.80px;top:97.20px;overflow:visible" width="4.4" height="5.2" viewBox="0 0 4.4 5.2"><rect x="0.35" y="0.3" width="3.7" height="4.6" fill="#f0f0f0" stroke="#8a8a8a" stroke-width="0.5"/><rect x="0.9" y="1.7" width="2.6" height="2.6" fill="#90a8b0"/></svg>
<div class="t" style="left:320.20px;top:100.85px;font-size:5.074px;color:#151515;font-family:'Liberation Sans',sans-serif;-webkit-text-stroke:0.08px #151515;transform:scaleX(0.9081);transform-origin:0 0;">index.html</div>
<svg class="r" style="left:343.60px;top:98.70px;overflow:visible" width="2.8" height="2.8" viewBox="0 0 2.8 2.8"><path d="M0.2 0.2 L2.6 2.6 M2.6 0.2 L0.2 2.6" stroke="#333" stroke-width="0.6"/></svg>
<div class="r" style="left:348.00px;top:95.60px;width:35.00px;height:8.20px;background:#e9e9e9;border:0.5px solid #c4c4c4;border-bottom:none"></div>
<svg class="r" style="left:350.30px;top:97.20px;overflow:visible" width="4.4" height="5.2" viewBox="0 0 4.4 5.2"><rect x="0.35" y="0.3" width="3.7" height="4.6" fill="#f0f0f0" stroke="#8a8a8a" stroke-width="0.5"/><rect x="0.9" y="1.7" width="2.6" height="2.6" fill="#c8a0a0"/></svg>
<div class="t" style="left:356.70px;top:100.85px;font-size:5.074px;color:#151515;font-family:'Liberation Sans',sans-serif;-webkit-text-stroke:0.08px #151515;transform:scaleX(0.8863);transform-origin:0 0;">hello.java</div>
<svg class="r" style="left:378.60px;top:98.70px;overflow:visible" width="2.8" height="2.8" viewBox="0 0 2.8 2.8"><path d="M0.2 0.2 L2.6 2.6 M2.6 0.2 L0.2 2.6" stroke="#333" stroke-width="0.6"/></svg>
<div class="r" style="left:383.00px;top:95.60px;width:49.00px;height:8.20px;background:#e9e9e9;border:0.5px solid #c4c4c4;border-bottom:none"></div>
<svg class="r" style="left:384.30px;top:97.20px;overflow:visible" width="4.4" height="5.2" viewBox="0 0 4.4 5.2"><rect x="0.35" y="0.3" width="3.7" height="4.6" fill="#f0f0f0" stroke="#8a8a8a" stroke-width="0.5"/><rect x="0.9" y="1.7" width="2.6" height="2.6" fill="#607060"/></svg>
<div class="t" style="left:390.70px;top:100.85px;font-size:5.074px;color:#151515;font-family:'Liberation Sans',sans-serif;-webkit-text-stroke:0.08px #151515;transform:scaleX(0.8541);transform-origin:0 0;">hibernate.cfg.xml</div>
<svg class="r" style="left:427.10px;top:98.70px;overflow:visible" width="2.8" height="2.8" viewBox="0 0 2.8 2.8"><path d="M0.2 0.2 L2.6 2.6 M2.6 0.2 L0.2 2.6" stroke="#333" stroke-width="0.6"/></svg>
<div class="r" style="left:432.00px;top:95.60px;width:30.80px;height:8.20px;background:#f6f9fc;border:0.5px solid #c4c4c4;border-bottom:none"></div>
<svg class="r" style="left:433.80px;top:97.20px;overflow:visible" width="4.4" height="5.2" viewBox="0 0 4.4 5.2"><rect x="0.35" y="0.3" width="3.7" height="4.6" fill="#f0f0f0" stroke="#8a8a8a" stroke-width="0.5"/><rect x="0.9" y="1.7" width="2.6" height="2.6" fill="#90a890"/></svg>
<div class="t" style="left:440.20px;top:100.85px;font-size:5.074px;color:#151515;font-family:'Liberation Sans',sans-serif;-webkit-text-stroke:0.08px #151515;transform:scaleX(0.8443);transform-origin:0 0;">CS.java</div>
<svg class="r" style="left:458.10px;top:98.70px;overflow:visible" width="2.8" height="2.8" viewBox="0 0 2.8 2.8"><path d="M0.2 0.2 L2.6 2.6 M2.6 0.2 L0.2 2.6" stroke="#333" stroke-width="0.6"/></svg>
<div class="r" style="left:462.80px;top:95.60px;width:56.20px;height:8.20px;background:#e9e9e9;border:0.5px solid #c4c4c4;border-bottom:none"></div>
<svg class="r" style="left:463.80px;top:97.20px;overflow:visible" width="4.4" height="5.2" viewBox="0 0 4.4 5.2"><rect x="0.35" y="0.3" width="3.7" height="4.6" fill="#f0f0f0" stroke="#8a8a8a" stroke-width="0.5"/><rect x="0.9" y="1.7" width="2.6" height="2.6" fill="#9a8048"/></svg>
<div class="t" style="left:470.20px;top:100.85px;font-size:5.074px;color:#151515;font-family:'Liberation Sans',sans-serif;-webkit-text-stroke:0.08px #151515;transform:scaleX(0.8653);transform-origin:0 0;">hibernate.reveng.xml</div>
<svg class="r" style="left:514.00px;top:98.70px;overflow:visible" width="2.8" height="2.8" viewBox="0 0 2.8 2.8"><path d="M0.2 0.2 L2.6 2.6 M2.6 0.2 L0.2 2.6" stroke="#333" stroke-width="0.6"/></svg>
<div class="r" style="left:519.00px;top:95.60px;width:58.00px;height:8.20px;background:#e9e9e9;border:0.5px solid #c4c4c4;border-bottom:none"></div>
<svg class="r" style="left:520.80px;top:97.20px;overflow:visible" width="4.4" height="5.2" viewBox="0 0 4.4 5.2"><rect x="0.35" y="0.3" width="3.7" height="4.6" fill="#f0f0f0" stroke="#8a8a8a" stroke-width="0.5"/><rect x="0.9" y="1.7" width="2.6" height="2.6" fill="#a8a8a8"/></svg>
<div class="t" style="left:527.20px;top:100.85px;font-size:5.074px;color:#151515;font-family:'Liberation Sans',sans-serif;-webkit-text-stroke:0.08px #151515;transform:scaleX(0.7371);transform-origin:0 0;">NewHibernateUtil.java</div>
<svg class="r" style="left:572.60px;top:98.70px;overflow:visible" width="2.8" height="2.8" viewBox="0 0 2.8 2.8"><path d="M0.2 0.2 L2.6 2.6 M2.6 0.2 L0.2 2.6" stroke="#333" stroke-width="0.6"/></svg>
<svg class="r" style="left:616.80px;top:97.80px;overflow:visible" width="3" height="3.4" viewBox="0 0 3 3.4"><path d="M2.6 0.2 L0.3 1.7 L2.6 3.2 Z" fill="#333"/></svg>
<svg class="r" style="left:622.60px;top:97.80px;overflow:visible" width="3" height="3.4" viewBox="0 0 3 3.4"><path d="M0.3 0.2 L2.6 1.7 L0.3 3.2 Z" fill="#b0b0b0"/></svg>
<svg class="r" style="left:628.50px;top:98.40px;overflow:visible" width="3.6" height="2.4" viewBox="0 0 3.6 2.4"><path d="M0.2 0.2 L3.4 0.2 L1.8 2.2 Z" fill="#333"/></svg>
<div class="r" style="left:634.40px;top:97.90px;width:4.00px;height:3.40px;background:transparent;border:0.5px solid #444;border-top-width:0.9px"></div>
<div class="r" style="left:193.00px;top:104.00px;width:447.00px;height:9.20px;background:#efefef;"></div>
<div class="r" style="left:193.00px;top:103.90px;width:447.00px;height:0.60px;background:#cdcdcd;"></div>
<div class="r" style="left:193.00px;top:112.90px;width:447.00px;height:0.60px;background:#cdcdcd;"></div>
<div class="r" style="left:193.20px;top:104.10px;width:19.60px;height:8.60px;background:#d3e5f6;border:0.5px solid #b6d0e8"></div>
<div class="t" style="left:197.00px;top:109.50px;font-size:5.074px;color:#1a2850;font-family:'Liberation Sans',sans-serif;-webkit-text-stroke:0.04px #1a2850;transform:scaleX(0.8086);transform-origin:0 0;">Source</div>
<div class="t" style="left:215.80px;top:109.50px;font-size:5.074px;color:#1e1e1e;font-family:'Liberation Sans',sans-serif;-webkit-text-stroke:0.04px #1e1e1e;transform:scaleX(0.8361);transform-origin:0 0;">History</div>
<div class="r" style="left:234.80px;top:105.00px;width:0.50px;height:7.00px;background:#c6c6c6;"></div>
<div class="r" style="left:265.20px;top:105.00px;width:0.50px;height:7.00px;background:#c6c6c6;"></div>
<div class="r" style="left:305.20px;top:105.00px;width:0.50px;height:7.00px;background:#c6c6c6;"></div>
<div class="r" style="left:331.00px;top:105.00px;width:0.50px;height:7.00px;background:#c6c6c6;"></div>
<div class="r" style="left:347.20px;top:105.00px;width:0.50px;height:7.00px;background:#c6c6c6;"></div>
<div class="r" style="left:365.00px;top:105.00px;width:0.50px;height:7.00px;background:#c6c6c6;"></div>
<svg class="r" style="left:236.00px;top:105.40px;overflow:visible" width="6" height="6" viewBox="0 0 6 6"><rect x="0.6" y="0.6" width="4.6" height="4.8" fill="#d8d0c0" stroke="#8a8070" stroke-width="0.5"/><path d="M1.6 4.4 L5.4 0.8" stroke="#a07840" stroke-width="0.9"/></svg>
<svg class="r" style="left:243.80px;top:105.40px;overflow:visible" width="6" height="6" viewBox="0 0 6 6"><rect x="0.6" y="0.6" width="4.8" height="4.8" fill="#b4b4b4"/><rect x="1.4" y="1.4" width="3.2" height="3.2" fill="#c8c8c8"/></svg>
<svg class="r" style="left:255.00px;top:105.40px;overflow:visible" width="6" height="6" viewBox="0 0 6 6"><rect x="0.6" y="0.6" width="4.8" height="4.8" fill="#b4b4b4"/><rect x="1.4" y="1.4" width="3.2" height="3.2" fill="#c8c8c8"/></svg>
<svg class="r" style="left:250.20px;top:107.90px;overflow:visible" width="2" height="1.4" viewBox="0 0 2 1.4"><path d="M0 0 L2 0 L1 1.3 Z" fill="#555"/></svg>
<svg class="r" style="left:261.60px;top:107.90px;overflow:visible" width="2" height="1.4" viewBox="0 0 2 1.4"><path d="M0 0 L2 0 L1 1.3 Z" fill="#555"/></svg>
<svg class="r" style="left:267.00px;top:105.40px;overflow:visible" width="6" height="6" viewBox="0 0 6 6"><rect x="0.4" y="0.4" width="3.8" height="4.2" fill="#f4f4f4" stroke="#666" stroke-width="0.5"/><circle cx="3.4" cy="3.4" r="1.5" fill="none" stroke="#333" stroke-width="0.7"/><path d="M4.4 4.4 L5.7 5.7" stroke="#333" stroke-width="0.8"/></svg>
<svg class="r" style="left:274.50px;top:105.40px;overflow:visible" width="6" height="6" viewBox="0 0 6 6"><rect x="0.4" y="0.4" width="5.2" height="2.6" fill="#f0c890" stroke="#c08a40" stroke-width="0.4"/><path d="M1.2 4.2 L3 2.8 L4.8 4.2 M3 3 V5.8" stroke="#4a88c8" stroke-width="0.8" fill="none"/></svg>
<svg class="r" style="left:283.00px;top:105.40px;overflow:visible" width="6" height="6" viewBox="0 0 6 6"><rect x="0.4" y="0.4" width="5.2" height="2.6" fill="#f0c890" stroke="#c08a40" stroke-width="0.4"/><path d="M1.2 4.2 L3 5.6 L4.8 4.2 M3 2.8 V5.4" stroke="#4a88c8" stroke-width="0.8" fill="none"/></svg>
<svg class="r" style="left:291.00px;top:105.40px;overflow:visible" width="6" height="6" viewBox="0 0 6 6"><rect x="0.4" y="0.4" width="5.2" height="2.8" fill="#e8b870" stroke="#b08040" stroke-width="0.4"/><rect x="0.8" y="3.2" width="4.4" height="2.4" fill="#c4c0b8"/></svg>
<svg class="r" style="left:297.50px;top:105.40px;overflow:visible" width="6" height="6" viewBox="0 0 6 6"><rect x="0.4" y="0.6" width="4.4" height="4" fill="#fafafa" stroke="#777" stroke-width="0.5"/><path d="M3.6 3.4 L5.6 5.8" stroke="#222" stroke-width="0.9"/></svg>
<svg class="r" style="left:306.00px;top:105.40px;overflow:visible" width="6" height="6" viewBox="0 0 6 6"><path d="M0.6 4.6 L3.8 1 L5 2.2 L1.8 5.6 Z" fill="#e0a050"/><rect x="3.4" y="3.4" width="2.2" height="2.2" fill="#8ac0d8"/></svg>
<svg class="r" style="left:314.00px;top:105.40px;overflow:visible" width="6" height="6" viewBox="0 0 6 6"><path d="M1.6 0.6 L4.4 0.6 L3.6 3.4 L2.4 3.4 Z" fill="#e0a050"/><rect x="2" y="3.4" width="3" height="2.2" fill="#7ab8b0"/></svg>
<svg class="r" style="left:322.50px;top:105.40px;overflow:visible" width="6" height="6" viewBox="0 0 6 6"><circle cx="2" cy="2.2" r="1.5" fill="none" stroke="#8a9aa8" stroke-width="0.9"/><circle cx="4" cy="3.8" r="1.5" fill="none" stroke="#8a9aa8" stroke-width="0.9"/></svg>
<svg class="r" style="left:333.00px;top:105.40px;overflow:visible" width="6" height="6" viewBox="0 0 6 6"><rect x="0.5" y="0.8" width="5" height="4.6" fill="#c8d4d0" stroke="#6a8a84" stroke-width="0.5"/><path d="M1.4 2.4 H4.6 M1.4 3.8 H4.6" stroke="#4a7a74" stroke-width="0.6"/></svg>
<svg class="r" style="left:340.00px;top:105.40px;overflow:visible" width="6" height="6" viewBox="0 0 6 6"><rect x="0.5" y="0.8" width="5" height="4.6" fill="#c8d4d0" stroke="#6a8a84" stroke-width="0.5"/><path d="M1.4 2.4 H4.6 M1.4 3.8 H4.6" stroke="#4a7a74" stroke-width="0.6"/></svg>
<svg class="r" style="left:349.50px;top:105.40px;overflow:visible" width="6" height="6" viewBox="0 0 6 6"><circle cx="3" cy="3" r="2.1" fill="#e07080"/></svg>
<svg class="r" style="left:357.00px;top:105.40px;overflow:visible" width="6" height="6" viewBox="0 0 6 6"><rect x="0.9" y="0.9" width="4.2" height="4.2" fill="#a8a8a8"/><rect x="1.7" y="1.7" width="2.6" height="2.6" fill="#c8c8c8"/></svg>
<svg class="r" style="left:366.50px;top:105.40px;overflow:visible" width="6" height="6" viewBox="0 0 6 6"><rect x="0.6" y="1" width="4.8" height="4.5" fill="#6aaa6a"/><rect x="1.5" y="0.3" width="3" height="1.5" fill="#9ac89a"/></svg>
<svg class="r" style="left:374.50px;top:105.40px;overflow:visible" width="6" height="6" viewBox="0 0 6 6"><path d="M0.5 5.5 H5.5 V0.8 H4 V3.6 H0.5 Z" fill="#333"/></svg>
<svg class="r" style="left:633.60px;top:106.40px;overflow:visible" width="4" height="4" viewBox="0 0 4 4"><path d="M2 0.3 V3.7 M0.3 2 H3.7" stroke="#555" stroke-width="0.6"/><path d="M2 0 L1.2 1 H2.8 Z M2 4 L1.2 3 H2.8 Z" fill="#555"/></svg>
<div class="r" style="left:193.00px;top:113.50px;width:435.00px;height:182.10px;background:#ffffff;"></div>
<div class="r" style="left:193.00px;top:113.50px;width:2.20px;height:182.10px;background:#eeeeee;"></div>
<div class="r" style="left:195.20px;top:113.50px;width:10.30px;height:182.10px;background:#e9e8e3;"></div>
<div class="r" style="left:205.40px;top:113.50px;width:0.50px;height:182.10px;background:#d6d6d6;"></div>
<div class="r" style="left:214.60px;top:113.50px;width:0.45px;height:182.10px;background:#eeeeee;"></div>
<div class="r" style="left:428.20px;top:113.50px;width:0.50px;height:182.10px;background:#f2c4c4;"></div>
<div class="r" style="left:628.00px;top:113.50px;width:12.00px;height:182.10px;background:#f0f0f0;"></div>
<div class="r" style="left:628.80px;top:150.20px;width:3.90px;height:29.20px;background:#8a8a8a;"></div>
<svg class="r" style="left:629.20px;top:116.00px;overflow:visible" width="3" height="2.2" viewBox="0 0 3 2.2"><path d="M0.2 2 L1.5 0.2 L2.8 2 Z" fill="#555"/></svg>
<svg class="r" style="left:629.20px;top:291.00px;overflow:visible" width="3" height="2.2" viewBox="0 0 3 2.2"><path d="M0.2 0.2 L1.5 2 L2.8 0.2 Z" fill="#555"/></svg>
<div class="r" style="left:634.60px;top:115.60px;width:3.20px;height:3.20px;background:#e8d040;border:0.4px solid #a89020"></div>
<div class="r" style="left:634.60px;top:120.80px;width:3.00px;height:0.70px;background:#555;"></div>
<div class="r" style="left:633.80px;top:144.50px;width:4.60px;height:1.00px;background:#e0c830;"></div>
<div class="r" style="left:633.80px;top:162.50px;width:4.60px;height:1.00px;background:#e0c830;"></div>
<div class="r" style="left:633.80px;top:184.70px;width:4.60px;height:1.00px;background:#e0c830;"></div>
<div class="r" style="left:633.80px;top:205.50px;width:4.60px;height:1.00px;background:#e0c830;"></div>
<svg class="r" style="left:636.60px;top:162.60px;overflow:visible" width="3.4" height="7" viewBox="0 0 3.4 7"><path d="M0.4 0.2 L0.4 5.6 L1.6 4.6 L2.6 6.6 L3.4 6.2 L2.4 4.3 L3.4 4.2 Z" fill="#fff" stroke="#333" stroke-width="0.5"/></svg>
<div class="r" style="left:193px;top:113.5px;width:435px;height:182.1px;overflow:hidden"><div class="r" style="left:-193px;top:-113.5px;width:640px;height:480px">
<div class="t" style="left:199.98px;top:114.97px;font-size:4.144px;color:#303030;font-family:'Liberation Sans',sans-serif;-webkit-text-stroke:0.05px #303030;transform:scaleX(0.8929);transform-origin:0 0;">32</div>
<div class="t" style="left:225.64px;top:114.92px;font-size:4.566px;color:#2a2a2a;font-family:'Liberation Mono',monospace;-webkit-text-stroke:0px #2a2a2a;transform:scaleX(0.9709);transform-origin:0 0;"><span style="color:#a4a4a4;-webkit-text-stroke-color:#a4a4a4;">// View Employee</span></div>
<div class="t" style="left:199.98px;top:120.96px;font-size:4.144px;color:#303030;font-family:'Liberation Sans',sans-serif;-webkit-text-stroke:0.05px #303030;transform:scaleX(0.8929);transform-origin:0 0;">33</div>
<div class="t" style="left:225.64px;top:120.91px;font-size:4.566px;color:#2a2a2a;font-family:'Liberation Mono',monospace;-webkit-text-stroke:0px #2a2a2a;transform:scaleX(0.9709);transform-origin:0 0;"><span style="color:#20206a;-webkit-text-stroke-color:#20206a;">public</span> <span style="color:#20206a;-webkit-text-stroke-color:#20206a;">void</span> <b>viewEmployee</b>(<span style="color:#20206a;-webkit-text-stroke-color:#20206a;">int</span> id) {</div>
<div class="t" style="left:199.98px;top:126.95px;font-size:4.144px;color:#303030;font-family:'Liberation Sans',sans-serif;-webkit-text-stroke:0.05px #303030;transform:scaleX(0.8929);transform-origin:0 0;">34</div>
<div class="t" style="left:225.64px;top:126.90px;font-size:4.566px;color:#2a2a2a;font-family:'Liberation Mono',monospace;-webkit-text-stroke:0px #2a2a2a;transform:scaleX(0.9709);transform-origin:0 0;">SessionFactory sessionFactory = NewHibernateUtil.getSessionFactory();</div>
<div class="t" style="left:199.98px;top:132.94px;font-size:4.144px;color:#303030;font-family:'Liberation Sans',sans-serif;-webkit-text-stroke:0.05px #303030;transform:scaleX(0.8929);transform-origin:0 0;">35</div>
<div class="t" style="left:225.64px;top:132.89px;font-size:4.566px;color:#2a2a2a;font-family:'Liberation Mono',monospace;-webkit-text-stroke:0px #2a2a2a;transform:scaleX(0.9709);transform-origin:0 0;">Session session = sessionFactory.openSession();</div>
<div class="t" style="left:199.98px;top:138.93px;font-size:4.144px;color:#303030;font-family:'Liberation Sans',sans-serif;-webkit-text-stroke:0.05px #303030;transform:scaleX(0.8929);transform-origin:0 0;">36</div>
<div class="t" style="left:225.64px;top:138.88px;font-size:4.566px;color:#2a2a2a;font-family:'Liberation Mono',monospace;-webkit-text-stroke:0px #2a2a2a;transform:scaleX(0.9709);transform-origin:0 0;"><span style="color:#20206a;-webkit-text-stroke-color:#20206a;">try</span> {</div>
<div class="t" style="left:199.98px;top:144.92px;font-size:4.144px;color:#303030;font-family:'Liberation Sans',sans-serif;-webkit-text-stroke:0.05px #303030;transform:scaleX(0.8929);transform-origin:0 0;">37</div>
<div class="t" style="left:236.28px;top:144.87px;font-size:4.566px;color:#2a2a2a;font-family:'Liberation Mono',monospace;-webkit-text-stroke:0px #2a2a2a;transform:scaleX(0.9709);transform-origin:0 0;">Employee employee = (Employee) session.get(Employee.<span style="color:#20206a;-webkit-text-stroke-color:#20206a;">class</span>, id);</div>
<div class="t" style="left:199.98px;top:150.91px;font-size:4.144px;color:#303030;font-family:'Liberation Sans',sans-serif;-webkit-text-stroke:0.05px #303030;transform:scaleX(0.8929);transform-origin:0 0;">38</div>
<div class="t" style="left:236.28px;top:150.86px;font-size:4.566px;color:#2a2a2a;font-family:'Liberation Mono',monospace;-webkit-text-stroke:0px #2a2a2a;transform:scaleX(0.9709);transform-origin:0 0;"><span style="color:#20206a;-webkit-text-stroke-color:#20206a;">if</span> (employee != <span style="color:#20206a;-webkit-text-stroke-color:#20206a;">null</span>) {</div>
<div class="t" style="left:199.98px;top:156.90px;font-size:4.144px;color:#303030;font-family:'Liberation Sans',sans-serif;-webkit-text-stroke:0.05px #303030;transform:scaleX(0.8929);transform-origin:0 0;">39</div>
<div class="t" style="left:246.92px;top:156.85px;font-size:4.566px;color:#2a2a2a;font-family:'Liberation Mono',monospace;-webkit-text-stroke:0px #2a2a2a;transform:scaleX(0.9709);transform-origin:0 0;">System.<span style="color:#6a9a5a;-webkit-text-stroke-color:#6a9a5a;font-style:italic">out</span>.println(<span style="color:#b08848;-webkit-text-stroke-color:#b08848;">&quot;Employee Details: &quot;</span> + employee);</div>
<div class="t" style="left:199.98px;top:162.89px;font-size:4.144px;color:#303030;font-family:'Liberation Sans',sans-serif;-webkit-text-stroke:0.05px #303030;transform:scaleX(0.8929);transform-origin:0 0;">40</div>
<div class="t" style="left:236.28px;top:162.84px;font-size:4.566px;color:#2a2a2a;font-family:'Liberation Mono',monospace;-webkit-text-stroke:0px #2a2a2a;transform:scaleX(0.9709);transform-origin:0 0;">} <span style="color:#20206a;-webkit-text-stroke-color:#20206a;">else</span> {</div>
<div class="t" style="left:199.98px;top:168.88px;font-size:4.144px;color:#303030;font-family:'Liberation Sans',sans-serif;-webkit-text-stroke:0.05px #303030;transform:scaleX(0.8929);transform-origin:0 0;">41</div>
<div class="t" style="left:246.92px;top:168.83px;font-size:4.566px;color:#2a2a2a;font-family:'Liberation Mono',monospace;-webkit-text-stroke:0px #2a2a2a;transform:scaleX(0.9709);transform-origin:0 0;">System.<span style="color:#6a9a5a;-webkit-text-stroke-color:#6a9a5a;font-style:italic">out</span>.println(<span style="color:#b08848;-webkit-text-stroke-color:#b08848;">&quot;No employee found with ID &quot;</span> + id);</div>
<div class="t" style="left:199.98px;top:174.87px;font-size:4.144px;color:#303030;font-family:'Liberation Sans',sans-serif;-webkit-text-stroke:0.05px #303030;transform:scaleX(0.8929);transform-origin:0 0;">42</div>
<div class="t" style="left:236.28px;top:174.82px;font-size:4.566px;color:#2a2a2a;font-family:'Liberation Mono',monospace;-webkit-text-stroke:0px #2a2a2a;transform:scaleX(0.9709);transform-origin:0 0;">}</div>
<div class="t" style="left:199.98px;top:180.86px;font-size:4.144px;color:#303030;font-family:'Liberation Sans',sans-serif;-webkit-text-stroke:0.05px #303030;transform:scaleX(0.8929);transform-origin:0 0;">43</div>
<div class="t" style="left:225.64px;top:180.81px;font-size:4.566px;color:#2a2a2a;font-family:'Liberation Mono',monospace;-webkit-text-stroke:0px #2a2a2a;transform:scaleX(0.9709);transform-origin:0 0;">} <span style="color:#20206a;-webkit-text-stroke-color:#20206a;">catch</span> (Exception e) {</div>
<div class="t" style="left:199.98px;top:186.85px;font-size:4.144px;color:#303030;font-family:'Liberation Sans',sans-serif;-webkit-text-stroke:0.05px #303030;transform:scaleX(0.8929);transform-origin:0 0;">44</div>
<div class="t" style="left:236.28px;top:186.80px;font-size:4.566px;color:#2a2a2a;font-family:'Liberation Mono',monospace;-webkit-text-stroke:0px #2a2a2a;transform:scaleX(0.9709);transform-origin:0 0;">e.printStackTrace();</div>
<div class="t" style="left:199.98px;top:192.84px;font-size:4.144px;color:#303030;font-family:'Liberation Sans',sans-serif;-webkit-text-stroke:0.05px #303030;transform:scaleX(0.8929);transform-origin:0 0;">45</div>
<div class="t" style="left:225.64px;top:192.79px;font-size:4.566px;color:#2a2a2a;font-family:'Liberation Mono',monospace;-webkit-text-stroke:0px #2a2a2a;transform:scaleX(0.9709);transform-origin:0 0;">} <span style="color:#20206a;-webkit-text-stroke-color:#20206a;">finally</span> {</div>
<div class="t" style="left:199.98px;top:198.83px;font-size:4.144px;color:#303030;font-family:'Liberation Sans',sans-serif;-webkit-text-stroke:0.05px #303030;transform:scaleX(0.8929);transform-origin:0 0;">46</div>
<div class="t" style="left:236.28px;top:198.78px;font-size:4.566px;color:#2a2a2a;font-family:'Liberation Mono',monospace;-webkit-text-stroke:0px #2a2a2a;transform:scaleX(0.9709);transform-origin:0 0;">session.close();</div>
<div class="t" style="left:199.98px;top:204.82px;font-size:4.144px;color:#303030;font-family:'Liberation Sans',sans-serif;-webkit-text-stroke:0.05px #303030;transform:scaleX(0.8929);transform-origin:0 0;">47</div>
<div class="t" style="left:225.64px;top:204.77px;font-size:4.566px;color:#2a2a2a;font-family:'Liberation Mono',monospace;-webkit-text-stroke:0px #2a2a2a;transform:scaleX(0.9709);transform-origin:0 0;">}</div>
<div class="t" style="left:199.98px;top:210.81px;font-size:4.144px;color:#303030;font-family:'Liberation Sans',sans-serif;-webkit-text-stroke:0.05px #303030;transform:scaleX(0.8929);transform-origin:0 0;">48</div>
<div class="t" style="left:215.00px;top:210.76px;font-size:4.566px;color:#2a2a2a;font-family:'Liberation Mono',monospace;-webkit-text-stroke:0px #2a2a2a;transform:scaleX(0.9709);transform-origin:0 0;">}</div>
<div class="t" style="left:199.98px;top:216.80px;font-size:4.144px;color:#303030;font-family:'Liberation Sans',sans-serif;-webkit-text-stroke:0.05px #303030;transform:scaleX(0.8929);transform-origin:0 0;">49</div>
<div class="t" style="left:199.98px;top:222.79px;font-size:4.144px;color:#303030;font-family:'Liberation Sans',sans-serif;-webkit-text-stroke:0.05px #303030;transform:scaleX(0.8929);transform-origin:0 0;">50</div>
<div class="t" style="left:199.98px;top:228.78px;font-size:4.144px;color:#303030;font-family:'Liberation Sans',sans-serif;-webkit-text-stroke:0.05px #303030;transform:scaleX(0.8929);transform-origin:0 0;">51</div>
<div class="t" style="left:225.64px;top:228.73px;font-size:4.566px;color:#2a2a2a;font-family:'Liberation Mono',monospace;-webkit-text-stroke:0px #2a2a2a;transform:scaleX(0.9709);transform-origin:0 0;"><span style="color:#a4a4a4;-webkit-text-stroke-color:#a4a4a4;">// Update Employee</span></div>
<div class="t" style="left:199.98px;top:234.77px;font-size:4.144px;color:#303030;font-family:'Liberation Sans',sans-serif;-webkit-text-stroke:0.05px #303030;transform:scaleX(0.8929);transform-origin:0 0;">52</div>
<div class="t" style="left:215.00px;top:234.72px;font-size:4.566px;color:#2a2a2a;font-family:'Liberation Mono',monospace;-webkit-text-stroke:0px #2a2a2a;transform:scaleX(0.9709);transform-origin:0 0;"><span style="color:#20206a;-webkit-text-stroke-color:#20206a;">public</span> <span style="color:#20206a;-webkit-text-stroke-color:#20206a;">void</span> <b>updateEmployee</b>(<span style="color:#20206a;-webkit-text-stroke-color:#20206a;">int</span> id, String newDepartment) {</div>
<div class="t" style="left:199.98px;top:240.76px;font-size:4.144px;color:#303030;font-family:'Liberation Sans',sans-serif;-webkit-text-stroke:0.05px #303030;transform:scaleX(0.8929);transform-origin:0 0;">53</div>
<div class="t" style="left:225.64px;top:240.71px;font-size:4.566px;color:#2a2a2a;font-family:'Liberation Mono',monospace;-webkit-text-stroke:0px #2a2a2a;transform:scaleX(0.9709);transform-origin:0 0;">SessionFactory sessionFactory = NewHibernateUtil.getSessionFactory();</div>
<div class="t" style="left:199.98px;top:246.75px;font-size:4.144px;color:#303030;font-family:'Liberation Sans',sans-serif;-webkit-text-stroke:0.05px #303030;transform:scaleX(0.8929);transform-origin:0 0;">54</div>
<div class="t" style="left:225.64px;top:246.70px;font-size:4.566px;color:#2a2a2a;font-family:'Liberation Mono',monospace;-webkit-text-stroke:0px #2a2a2a;transform:scaleX(0.9709);transform-origin:0 0;">Session session = sessionFactory.openSession();</div>
<div class="t" style="left:199.98px;top:252.74px;font-size:4.144px;color:#303030;font-family:'Liberation Sans',sans-serif;-webkit-text-stroke:0.05px #303030;transform:scaleX(0.8929);transform-origin:0 0;">55</div>
<div class="t" style="left:225.64px;top:252.69px;font-size:4.566px;color:#2a2a2a;font-family:'Liberation Mono',monospace;-webkit-text-stroke:0px #2a2a2a;transform:scaleX(0.9709);transform-origin:0 0;">Transaction transaction = session.beginTransaction();</div>
<div class="t" style="left:199.98px;top:258.73px;font-size:4.144px;color:#303030;font-family:'Liberation Sans',sans-serif;-webkit-text-stroke:0.05px #303030;transform:scaleX(0.8929);transform-origin:0 0;">56</div>
<div class="t" style="left:225.64px;top:258.68px;font-size:4.566px;color:#2a2a2a;font-family:'Liberation Mono',monospace;-webkit-text-stroke:0px #2a2a2a;transform:scaleX(0.9709);transform-origin:0 0;"><span style="color:#20206a;-webkit-text-stroke-color:#20206a;">try</span> {</div>
<div class="t" style="left:199.98px;top:264.72px;font-size:4.144px;color:#303030;font-family:'Liberation Sans',sans-serif;-webkit-text-stroke:0.05px #303030;transform:scaleX(0.8929);transform-origin:0 0;">57</div>
<div class="t" style="left:236.28px;top:264.67px;font-size:4.566px;color:#2a2a2a;font-family:'Liberation Mono',monospace;-webkit-text-stroke:0px #2a2a2a;transform:scaleX(0.9709);transform-origin:0 0;">Employee employee = (Employee) session.get(Employee.<span style="color:#20206a;-webkit-text-stroke-color:#20206a;">class</span>, id);</div>
<div class="t" style="left:199.98px;top:270.71px;font-size:4.144px;color:#303030;font-family:'Liberation Sans',sans-serif;-webkit-text-stroke:0.05px #303030;transform:scaleX(0.8929);transform-origin:0 0;">58</div>
<div class="t" style="left:236.28px;top:270.66px;font-size:4.566px;color:#2a2a2a;font-family:'Liberation Mono',monospace;-webkit-text-stroke:0px #2a2a2a;transform:scaleX(0.9709);transform-origin:0 0;"><span style="color:#20206a;-webkit-text-stroke-color:#20206a;">if</span> (employee != <span style="color:#20206a;-webkit-text-stroke-color:#20206a;">null</span>) {</div>
<div class="t" style="left:199.98px;top:276.70px;font-size:4.144px;color:#303030;font-family:'Liberation Sans',sans-serif;-webkit-text-stroke:0.05px #303030;transform:scaleX(0.8929);transform-origin:0 0;">59</div>
<div class="t" style="left:246.92px;top:276.65px;font-size:4.566px;color:#2a2a2a;font-family:'Liberation Mono',monospace;-webkit-text-stroke:0px #2a2a2a;transform:scaleX(0.9709);transform-origin:0 0;">employee.setDepartment(newDepartment);</div>
<div class="t" style="left:199.98px;top:282.69px;font-size:4.144px;color:#303030;font-family:'Liberation Sans',sans-serif;-webkit-text-stroke:0.05px #303030;transform:scaleX(0.8929);transform-origin:0 0;">60</div>
<div class="t" style="left:246.92px;top:282.64px;font-size:4.566px;color:#2a2a2a;font-family:'Liberation Mono',monospace;-webkit-text-stroke:0px #2a2a2a;transform:scaleX(0.9709);transform-origin:0 0;">session.update(employee);</div>
<div class="t" style="left:199.98px;top:288.68px;font-size:4.144px;color:#303030;font-family:'Liberation Sans',sans-serif;-webkit-text-stroke:0.05px #303030;transform:scaleX(0.8929);transform-origin:0 0;">61</div>
<div class="t" style="left:246.92px;top:288.63px;font-size:4.566px;color:#2a2a2a;font-family:'Liberation Mono',monospace;-webkit-text-stroke:0px #2a2a2a;transform:scaleX(0.9709);transform-origin:0 0;">transaction.commit();</div>
<div class="t" style="left:199.98px;top:294.67px;font-size:4.144px;color:#303030;font-family:'Liberation Sans',sans-serif;-webkit-text-stroke:0.05px #303030;transform:scaleX(0.8929);transform-origin:0 0;">62</div>
<div class="t" style="left:246.92px;top:294.62px;font-size:4.566px;color:#2a2a2a;font-family:'Liberation Mono',monospace;-webkit-text-stroke:0px #2a2a2a;transform:scaleX(0.9709);transform-origin:0 0;">System.<span style="color:#6a9a5a;-webkit-text-stroke-color:#6a9a5a;font-style:italic">out</span>.println(<span style="color:#b08848;-webkit-text-stroke-color:#b08848;">&quot;Employee updated successfully!&quot;</span>);</div>
<div class="t" style="left:199.98px;top:300.66px;font-size:4.144px;color:#303030;font-family:'Liberation Sans',sans-serif;-webkit-text-stroke:0.05px #303030;transform:scaleX(0.8929);transform-origin:0 0;">63</div>
<div class="t" style="left:236.28px;top:300.61px;font-size:4.566px;color:#2a2a2a;font-family:'Liberation Mono',monospace;-webkit-text-stroke:0px #2a2a2a;transform:scaleX(0.9709);transform-origin:0 0;">}</div>
</div></div>
<svg class="r" style="left:207.50px;top:118.15px;overflow:visible" width="4.2" height="4.2" viewBox="0 0 4.2 4.2"><rect x="0.25" y="0.25" width="3.7" height="3.7" fill="#fff" stroke="#9a9a9a" stroke-width="0.5"/><path d="M1 2.1 H3.2" stroke="#666" stroke-width="0.5"/></svg>
<div class="r" style="left:209.10px;top:122.35px;width:0.55px;height:87.75px;background:#a8a8a8;"></div>
<div class="r" style="left:209.10px;top:210.10px;width:3.00px;height:0.50px;background:#a8a8a8;"></div>
<svg class="r" style="left:207.50px;top:231.96px;overflow:visible" width="4.2" height="4.2" viewBox="0 0 4.2 4.2"><rect x="0.25" y="0.25" width="3.7" height="3.7" fill="#fff" stroke="#9a9a9a" stroke-width="0.5"/><path d="M1 2.1 H3.2" stroke="#666" stroke-width="0.5"/></svg>
<div class="r" style="left:209.10px;top:236.16px;width:0.55px;height:70.00px;background:#a8a8a8;"></div>
<div class="r" style="left:199.50px;top:183.40px;width:5.80px;height:5.40px;background:#e9e8e3;"></div>
<svg class="r" style="left:201.60px;top:184.20px;overflow:visible" width="4.4" height="4.4" viewBox="0 0 4.4 4.4"><circle cx="2.1" cy="2.1" r="1.75" fill="#d8c840" stroke="#8a7a20" stroke-width="0.55"/><path d="M1.2 2.4 L2 3 L3.2 1.4" fill="none" stroke="#6a5a10" stroke-width="0.45"/></svg>
<div class="r" style="left:193.00px;top:295.60px;width:447.00px;height:6.80px;background:#eeeeee;"></div>
<div class="r" style="left:193.00px;top:295.60px;width:435.00px;height:0.50px;background:#d4d4d4;"></div>
<svg class="r" style="left:197.40px;top:297.20px;overflow:visible" width="3" height="4.6" viewBox="0 0 3 4.6"><path d="M0.4 0.4 L2.6 2.3 L0.4 4.2" fill="none" stroke="#444" stroke-width="0.7"/></svg>
<svg class="r" style="left:635.20px;top:298.00px;overflow:visible" width="2.2" height="2.2" viewBox="0 0 2.2 2.2"><path d="M0.2 0.2 L2 2 M2 0.2 L0.2 2" stroke="#555" stroke-width="0.5"/></svg>
<div class="r" style="left:192.60px;top:302.40px;width:447.40px;height:94.00px;background:#e8e8e8;"></div>
<div class="r" style="left:193.00px;top:302.00px;width:447.00px;height:0.60px;background:#cccccc;"></div>
<div class="r" style="left:193.00px;top:302.60px;width:447.00px;height:7.60px;background:#ececec;"></div>
<div class="r" style="left:193.00px;top:310.00px;width:447.00px;height:0.60px;background:#d0d0d0;"></div>
<div class="r" style="left:193.40px;top:302.80px;width:41.20px;height:7.20px;background:#fbfbfb;border:0.5px solid #c4c4c4;border-bottom:none"></div>
<div class="t" style="left:195.00px;top:308.20px;font-size:4.956px;color:#222;font-family:'Liberation Sans',sans-serif;-webkit-text-stroke:0.04px #222;transform:scaleX(0.8156);transform-origin:0 0;">Output - CS (run)</div>
<svg class="r" style="left:230.20px;top:306.20px;overflow:visible" width="3.2" height="3.2" viewBox="0 0 3.2 3.2"><path d="M0.3 0.3 L2.9 2.9 M2.9 0.3 L0.3 2.9" stroke="#333" stroke-width="0.6"/></svg>
<div class="r" style="left:234.60px;top:303.20px;width:47.00px;height:6.80px;background:#efefef;border-right:0.6px solid #bcbcbc"></div>
<div class="t" style="left:236.50px;top:308.20px;font-size:4.956px;color:#2a2a2a;font-family:'Liberation Sans',sans-serif;font-weight:bold;-webkit-text-stroke:0px #2a2a2a;transform:scaleX(0.7825);transform-origin:0 0;">HTTP Server Monitor</div>
<div class="r" style="left:633.00px;top:306.40px;width:4.40px;height:1.00px;background:#333;"></div>
<div class="r" style="left:193.00px;top:310.00px;width:9.00px;height:86.30px;background:#eeeeee;"></div>
<div class="r" style="left:201.80px;top:310.00px;width:0.50px;height:86.30px;background:#d4d4d4;"></div>
<svg class="r" style="left:194.60px;top:312.00px;overflow:visible" width="6" height="5.2" viewBox="0 0 6 5.2"><path d="M0.3 0.3 L2.8 2.6 L0.3 4.9 Z M2.8 0.3 L5.3 2.6 L2.8 4.9 Z" fill="#c4ccbc" stroke="#98a890" stroke-width="0.4"/></svg>
<svg class="r" style="left:194.60px;top:319.60px;overflow:visible" width="6" height="5.2" viewBox="0 0 6 5.2"><path d="M0.3 0.3 L2.8 2.6 L0.3 4.9 Z M2.8 0.3 L5.3 2.6 L2.8 4.9 Z" fill="#c4ccbc" stroke="#98a890" stroke-width="0.4"/></svg>
<svg class="r" style="left:194.80px;top:327.60px;overflow:visible" width="5" height="5" viewBox="0 0 5 5"><rect x="0.2" y="0.2" width="4.6" height="4.6" rx="0.6" fill="#e06a6a"/><path d="M1.3 1.3 L3.7 3.7 M3.7 1.3 L1.3 3.7" stroke="#fff" stroke-width="0.7"/></svg>
<svg class="r" style="left:194.80px;top:335.20px;overflow:visible" width="5" height="5" viewBox="0 0 5 5"><path d="M0.5 1 H4.5 M0.5 2.5 H4.5 M0.5 4 H4.5" stroke="#8a8a8a" stroke-width="0.7"/><rect x="2.8" y="2.8" width="2" height="2" fill="#9a9a9a"/></svg>
<div class="r" style="left:202.30px;top:310.00px;width:429.90px;height:79.60px;background:#ffffff;"></div>
<div class="r" style="left:202.30px;top:389.40px;width:429.90px;height:6.90px;background:#f0f0f0;"></div>
<div class="r" style="left:214.60px;top:391.80px;width:282.40px;height:1.70px;background:#7a7a7a;"></div>
<div class="r" style="left:632.20px;top:310.00px;width:7.80px;height:86.30px;background:#f0f0f0;"></div>
<div class="r" style="left:634.30px;top:374.00px;width:2.40px;height:7.40px;background:#8a8a8a;"></div>
<div class="r" style="left:202.3px;top:310px;width:429.9px;height:79.4px;overflow:hidden"><div class="r" style="left:-202.3px;top:-310px;width:640px;height:480px">
<div class="t" style="left:208.60px;top:311.34px;font-size:5.570px;color:#4a4238;font-family:'Liberation Mono',monospace;-webkit-text-stroke:0.03px #4a4238;">Enter Department: CSE</div>
<div class="t" style="left:208.60px;top:319.64px;font-size:5.570px;color:#4a4238;font-family:'Liberation Mono',monospace;-webkit-text-stroke:0.03px #4a4238;">Enter salary: 20000</div>
<div class="t" style="left:208.60px;top:327.04px;font-size:5.570px;color:#4a4238;font-family:'Liberation Mono',monospace;-webkit-text-stroke:0.03px #4a4238;">Employee added successfully!</div>
<div class="t" style="left:208.60px;top:341.74px;font-size:5.570px;color:#4a4238;font-family:'Liberation Mono',monospace;-webkit-text-stroke:0.03px #4a4238;">=== Employee Management System ===</div>
<div class="t" style="left:208.60px;top:349.04px;font-size:5.570px;color:#4a4238;font-family:'Liberation Mono',monospace;-webkit-text-stroke:0.03px #4a4238;">1. Add Employee</div>
<div class="t" style="left:208.60px;top:356.44px;font-size:5.570px;color:#4a4238;font-family:'Liberation Mono',monospace;-webkit-text-stroke:0.03px #4a4238;">2. View Employee</div>
<div class="t" style="left:208.60px;top:363.74px;font-size:5.570px;color:#4a4238;font-family:'Liberation Mono',monospace;-webkit-text-stroke:0.03px #4a4238;">3. Update Employee</div>
<div class="t" style="left:208.60px;top:371.04px;font-size:5.570px;color:#4a4238;font-family:'Liberation Mono',monospace;-webkit-text-stroke:0.03px #4a4238;">4. Delete Employee</div>
<div class="t" style="left:208.60px;top:378.34px;font-size:5.570px;color:#4a4238;font-family:'Liberation Mono',monospace;-webkit-text-stroke:0.03px #4a4238;">5. Exit</div>
<div class="t" style="left:208.60px;top:385.74px;font-size:5.570px;color:#4a4238;font-family:'Liberation Mono',monospace;-webkit-text-stroke:0.03px #4a4238;">Enter your choice:</div>
</div></div>
<div class="r" style="left:0.00px;top:396.90px;width:640.00px;height:7.70px;background:#eeeeee;"></div>
<div class="r" style="left:0.00px;top:404.40px;width:640.00px;height:0.50px;background:#f8f8f8;"></div>
<div class="t" style="left:483.30px;top:401.91px;font-size:4.838px;color:#333;font-family:'Liberation Sans',sans-serif;-webkit-text-stroke:0.04px #333;transform:scaleX(0.8862);transform-origin:0 0;">CS (run)</div>
<div class="r" style="left:501.80px;top:397.80px;width:65.40px;height:5.80px;background:#f2f2f2;border:0.3px solid #e2e2e2;border-left:0.7px solid #444"></div>
<div class="t" style="left:525.00px;top:401.91px;font-size:4.838px;color:#78a4d8;font-family:'Liberation Sans',sans-serif;-webkit-text-stroke:0.02px #78a4d8;transform:scaleX(0.9171);transform-origin:0 0;">running...</div>
<svg class="r" style="left:569.60px;top:398.60px;overflow:visible" width="4" height="4" viewBox="0 0 4 4"><rect x="0.2" y="0.2" width="3.6" height="3.6" fill="#777"/><rect x="0.8" y="0.8" width="2.4" height="2.4" fill="#bbb"/></svg>
<svg class="r" style="left:580.60px;top:398.20px;overflow:visible" width="6" height="5" viewBox="0 0 6 5"><ellipse cx="3" cy="2.5" rx="2.5" ry="2.1" fill="none" stroke="#555" stroke-width="0.6"/><rect x="2.6" y="0.8" width="0.8" height="3.4" fill="#555"/></svg>
<div class="r" style="left:576.60px;top:397.80px;width:0.40px;height:6.00px;background:#dcdcdc;"></div>
<div class="r" style="left:591.50px;top:397.80px;width:0.40px;height:6.00px;background:#dcdcdc;"></div>
<div class="r" style="left:627.60px;top:397.80px;width:0.40px;height:6.00px;background:#dcdcdc;"></div>
<div class="t" style="left:605.60px;top:401.91px;font-size:4.838px;color:#333;font-family:'Liberation Sans',sans-serif;-webkit-text-stroke:0.04px #333;transform:scaleX(0.8178);transform-origin:0 0;">1:1</div>
<div class="t" style="left:631.60px;top:401.91px;font-size:4.838px;color:#333;font-family:'Liberation Sans',sans-serif;-webkit-text-stroke:0.04px #333;transform:scaleX(0.8680);transform-origin:0 0;">INS</div>
</div></div></body></html>
